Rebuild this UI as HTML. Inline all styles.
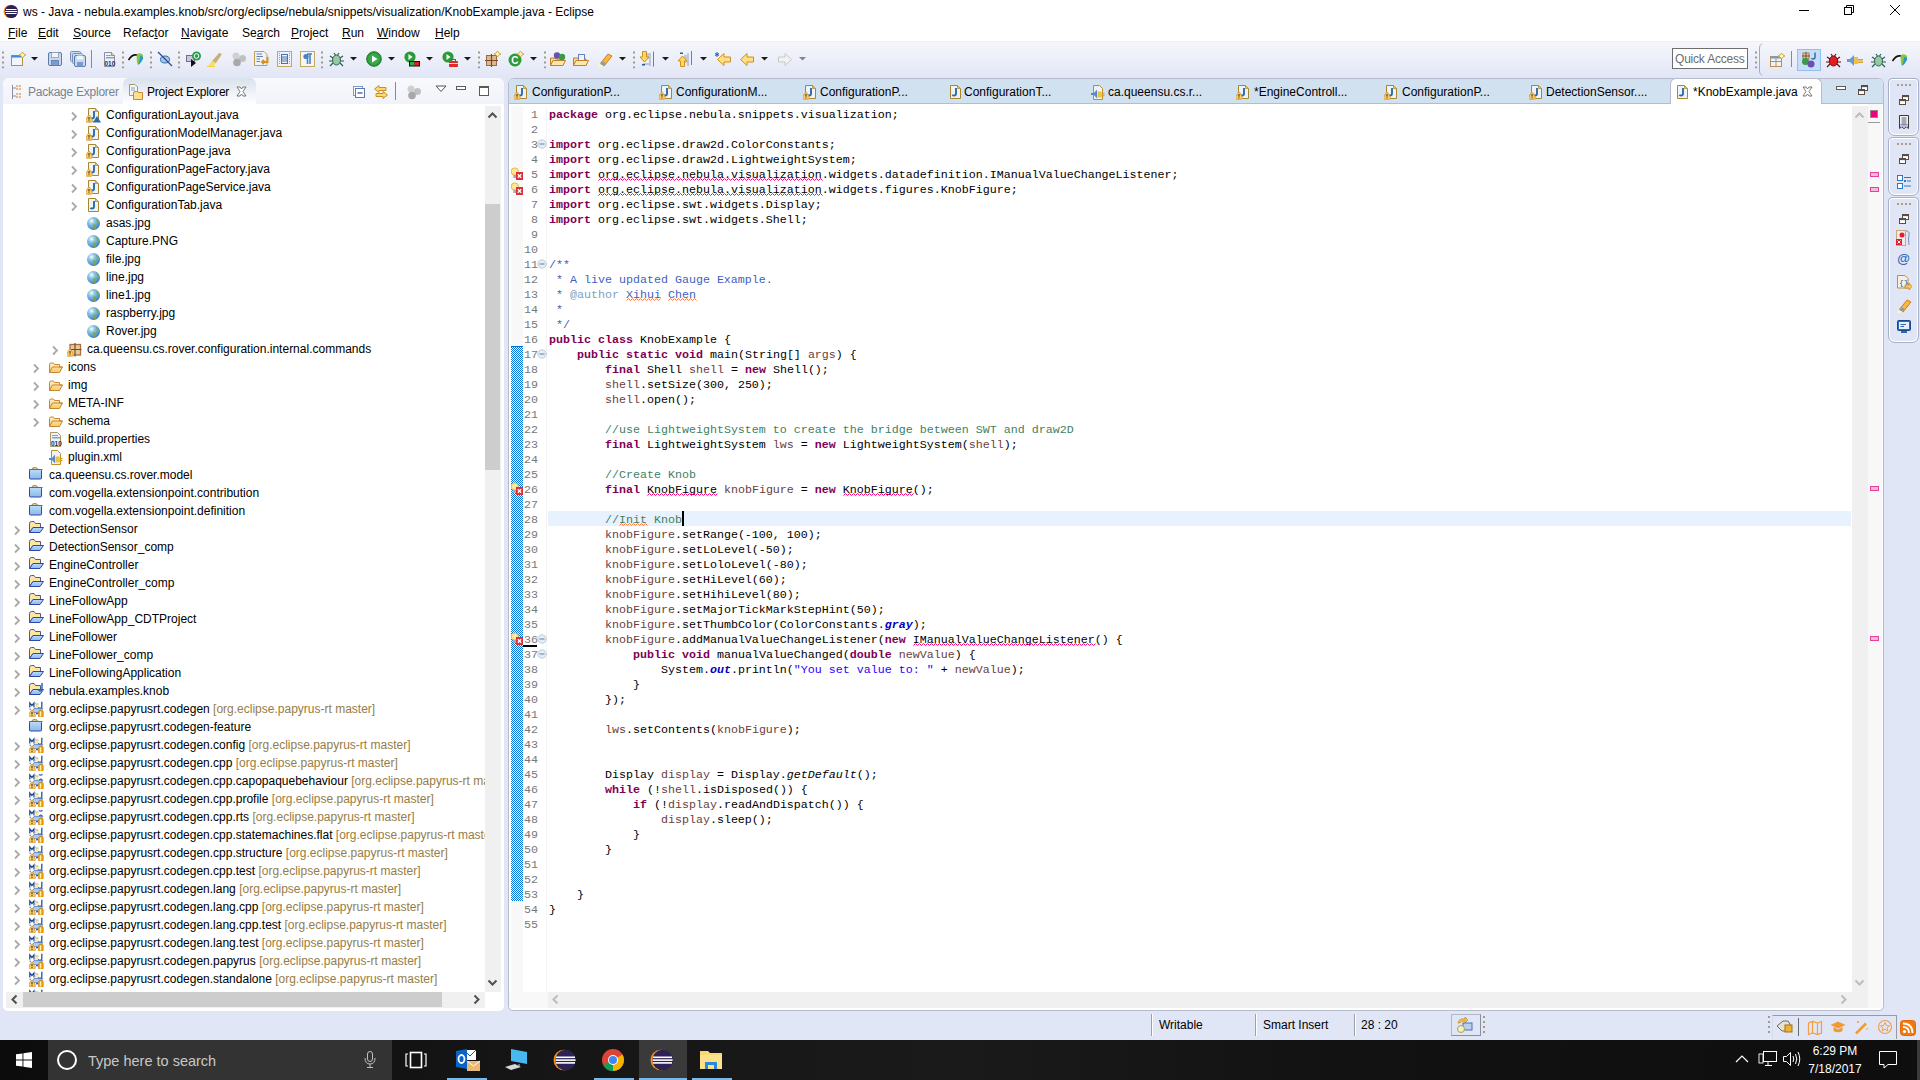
<!DOCTYPE html><html><head><meta charset="utf-8"><style>
*{box-sizing:border-box}
body{margin:0;width:1920px;height:1080px;position:relative;overflow:hidden;background:#E1E6F6;font-family:"Liberation Sans",sans-serif;font-size:12px;color:#000}
.a{position:absolute}
.t{position:absolute;white-space:pre;line-height:18px}
.i{position:absolute;width:16px;height:16px;overflow:visible}
.code{position:absolute;left:549px;top:108px;font-family:"Liberation Mono",monospace;font-size:11.67px;line-height:15px;white-space:pre;color:#000}
.code div{height:15px}
.k{color:#7F0055;font-weight:bold}
.c{color:#3F7F5F}
.jd{color:#3F5FBF}
.jt{color:#7F9FBF}
.s{color:#2A00FF}
.l{color:#6A3E3E}
.sf{color:#0000C0;font-style:italic;font-weight:bold}
.sm{font-style:italic}
.sq{}
.ln{position:absolute;left:517px;width:21px;text-align:right;font-family:"Liberation Mono",monospace;font-size:11.67px;line-height:15px;color:#787878}
.dec{color:#957D47}
.tab{position:absolute;top:79px;height:24px;line-height:24px;white-space:pre}
</style></head><body>

<svg width="0" height="0" style="position:absolute"><defs>
<linearGradient id="gfold" x1="0" y1="0" x2="0" y2="1"><stop offset="0" stop-color="#FFF3C8"/><stop offset="1" stop-color="#F5C96A"/></linearGradient>
<linearGradient id="gblue" x1="0" y1="0" x2="0" y2="1"><stop offset="0" stop-color="#B5E0FA"/><stop offset="1" stop-color="#8FB5E8"/></linearGradient>
<radialGradient id="gglobe" cx="0.35" cy="0.3" r="0.8"><stop offset="0" stop-color="#FFFFF0"/><stop offset="0.3" stop-color="#8CC8E8"/><stop offset="1" stop-color="#2F6FB5"/></radialGradient>
<symbol id="chev" viewBox="0 0 16 16"><path d="M6 5.5 L10 9.5 L6 13.5" fill="none" stroke="#A9A9A9" stroke-width="1.8"/></symbol>
<symbol id="warn" viewBox="0 0 16 16"><path d="M3 8.3 Q3.8 8.3 4.3 9.3 L6.3 13.3 Q6.8 15.2 5.3 15.2 H0.7 Q-0.8 15.2 -0.3 13.3 L1.7 9.3 Q2.2 8.3 3 8.3Z" fill="#F8CC68" stroke="#DC9838" stroke-width="0.9"/><path d="M3 10 V12.6 M3 13.4 V14.2" stroke="#3A2400" stroke-width="1"/></symbol>
<symbol id="jfile" viewBox="0 0 16 16"><path d="M2.5 1.5 H9.5 L12.5 4.5 V14.5 H2.5 Z" fill="#EEF3FA" stroke="#A8862E"/><path d="M9.5 1.5 L12.5 4.5 H9.5 Z" fill="#E8C878" stroke="#B8902A" stroke-width="0.8"/><path d="M8 4 V9.5 Q8 11.6 6 11.6 Q5 11.6 4.4 10.8" fill="none" stroke="#2E6AA8" stroke-width="1.9"/></symbol>
<symbol id="absov" viewBox="0 0 16 16"><path d="M11 9 L15 15.5 H7 Z" fill="#2A6AB0"/></symbol>
<symbol id="globe" viewBox="0 0 16 16"><circle cx="7.5" cy="8.5" r="6.5" fill="url(#gglobe)"/><path d="M8 9 Q10 10 10.5 12 Q9.5 14.5 8.5 14 Q8 12 7 10.5 Z" fill="#7FA83A"/><path d="M10.5 4 Q12.5 5 13 8 L12 9 Q11 6 10 5Z" fill="#8AB040"/></symbol>
<symbol id="pkg" viewBox="0 0 16 16"><rect x="3" y="3.5" width="10.5" height="10.5" fill="#E8CC98" stroke="#A86E48" stroke-width="1.3"/><path d="M8 2 V15.5 M3 8.5 H14.5" stroke="#7A4A30" stroke-width="1.2"/></symbol>
<symbol id="folder" viewBox="0 0 16 16"><path d="M1.5 5.5 Q1.5 4 3 4 H5.5 L6.5 5.5 H11.5 V8 H14.5 L11.5 13.5 H1.5 Z" fill="url(#gfold)" stroke="#C98530"/><path d="M1.5 13.5 L4.5 8 H14.5" fill="none" stroke="#C98530"/></symbol>
<symbol id="props" viewBox="0 0 16 16"><path d="M2.5 1.5 H9.5 L12.5 4.5 V15.5 H2.5 Z" fill="#EEF3FA" stroke="#A89870"/><rect x="4" y="4" width="6" height="1" fill="#8AA0C8"/><rect x="4" y="6" width="8" height="1.5" fill="#8AA0C8"/><text x="3" y="14.5" font-family="Liberation Sans" font-weight="bold" font-size="6.5" fill="#1A2E5A">010</text></symbol>
<symbol id="plugin" viewBox="0 0 16 16"><path d="M3.5 1.5 H9.5 L12.5 4.5 V15.5 H3.5 Z" fill="#EEF3FA" stroke="#B8902A"/><path d="M1 9 H4 L7 5.5 V14.5 L4 11 H1 Z" fill="#5A88C8"/><rect x="7.5" y="7.5" width="4" height="6" fill="#F0C040"/><rect x="11.5" y="9" width="3" height="1.3" fill="#D8A020"/><rect x="11.5" y="11" width="3" height="1.3" fill="#D8A020"/></symbol>
<symbol id="projc" viewBox="0 0 16 16"><path d="M3 2.5 Q3 0.5 5 0.5 H6.5 Q8.5 0.5 8.5 2.5" fill="#F5C870" stroke="#7A88A0" stroke-width="0.9"/><rect x="0.5" y="2.5" width="12" height="9.5" rx="1" fill="url(#gblue)" stroke="#2E46B0"/><path d="M-0.5 2.5 H13.5" stroke="#5A6A90"/></symbol>
<symbol id="projo" viewBox="0 0 16 16"><path d="M0.5 11.5 V2.5 Q0.5 0.5 2.5 0.5 H5 L6.5 2.5 H11.5 V6.5 H4 Z" fill="#FFE6A0" stroke="#4A5A98"/><path d="M0.5 11.5 L4 6.5 H14.5 L11 11.5 Z" fill="url(#gblue)" stroke="#2E46B0"/></symbol>
<symbol id="projj" viewBox="0 0 16 16"><path d="M0.5 11.5 V2.5 Q0.5 0.5 2.5 0.5 H5 L6.5 2.5 H11.5 V6.5 H4 Z" fill="#FFE6A0" stroke="#4A5A98"/><path d="M0.5 11.5 L4 6.5 H14.5 L11 11.5 Z" fill="url(#gblue)" stroke="#2E46B0"/><path d="M13 0 V6 Q13 8 11 8 Q10 8 9.5 7" fill="none" stroke="#2E6DB0" stroke-width="1.5"/></symbol>
<symbol id="papy" viewBox="0 0 16 16"><g transform="translate(0,0.8)"><path d="M0.8 5.8 V1.2 L2.9 3.6 L5 1.2 V5.8" fill="none" stroke="#1F4F98" stroke-width="1.3"/><path d="M5.8 0.5 L7.5 2 H9.5 V6.5 H5.8 Z" fill="#FCE6A8"/><path d="M6 1 L7.5 2.2 H9.5" fill="none" stroke="#8090A8" stroke-width="0.6"/><path d="M12.8 0 V4.6 Q12.8 6.6 10.8 6.6 Q9.8 6.6 9.3 5.6" stroke="#2E5FA8" stroke-width="1.4" fill="none"/><path d="M2 10.8 L5 6.8 H13.8 L10.8 10.8 Z" fill="#A8D0F5" stroke="#3A6AC0" stroke-width="0.7"/><path d="M1.2 6.8 V8.2" stroke="#2E46B0" stroke-width="0.9"/><path d="M3 8.3 Q3.8 8.3 4.3 9.3 L6.3 13.3 Q6.8 15 5.3 15 H0.7 Q-0.8 15 -0.3 13.3 L1.7 9.3 Q2.2 8.3 3 8.3Z" fill="#F8CC68" stroke="#D89030" stroke-width="0.8"/><path d="M3 10 V12.6 M3 13.4 V14.2" stroke="#3A2400" stroke-width="1"/><rect x="7" y="11.3" width="2" height="1.2" fill="#2E46B0"/><rect x="9.6" y="8.6" width="4.6" height="7" rx="1.3" fill="#F0A400" stroke="#C88000" stroke-width="0.7"/><rect x="10.8" y="9.6" width="1.4" height="5" fill="#FFF0B8"/></g></symbol>
<symbol id="papy2" viewBox="0 0 16 16"><g transform="translate(0,0.8)"><path d="M0.8 5.8 V1.2 L2.9 3.6 L5 1.2 V5.8" fill="none" stroke="#1F4F98" stroke-width="1.3"/><path d="M5.8 0.5 L7.5 2 H9.5 V6.5 H5.8 Z" fill="#FCE6A8"/><path d="M6 1 L7.5 2.2 H9.5" fill="none" stroke="#8090A8" stroke-width="0.6"/><path d="M10 0.5 Q11.5 2 13.5 0.5 M10 6.5 Q11.5 4 13.5 6.5" stroke="#2E5FA8" stroke-width="1.2" fill="none"/><path d="M2 10.8 L5 6.8 H13.8 L10.8 10.8 Z" fill="#A8D0F5" stroke="#3A6AC0" stroke-width="0.7"/><path d="M1.2 6.8 V8.2" stroke="#2E46B0" stroke-width="0.9"/><path d="M3 8.3 Q3.8 8.3 4.3 9.3 L6.3 13.3 Q6.8 15 5.3 15 H0.7 Q-0.8 15 -0.3 13.3 L1.7 9.3 Q2.2 8.3 3 8.3Z" fill="#F8CC68" stroke="#D89030" stroke-width="0.8"/><path d="M3 10 V12.6 M3 13.4 V14.2" stroke="#3A2400" stroke-width="1"/><rect x="7" y="11.3" width="2" height="1.2" fill="#2E46B0"/><rect x="9.6" y="8.6" width="4.6" height="7" rx="1.3" fill="#F0A400" stroke="#C88000" stroke-width="0.7"/><rect x="10.8" y="9.6" width="1.4" height="5" fill="#FFF0B8"/></g></symbol>
<symbol id="fold" viewBox="0 0 10 10"><circle cx="5" cy="5" r="4.2" fill="#E4EEF8" stroke="#B8C8D8" stroke-width="0.9"/><rect x="2.5" y="4.5" width="5" height="1" fill="#6A7A8A"/></symbol>
<symbol id="errq" viewBox="0 0 16 16"><circle cx="3.8" cy="5.5" r="3.6" fill="#FBE89A" stroke="#E8B030" stroke-width="0.9"/><rect x="2.3" y="9" width="3" height="3" fill="#A8A8B0"/><rect x="5" y="6" width="7" height="8" fill="#D9303A"/><path d="M6.8 8.2 L10.2 11.8 M10.2 8.2 L6.8 11.8" stroke="#fff" stroke-width="1.3"/></symbol>
<symbol id="dd" viewBox="0 0 8 8"><path d="M0 2 H7 L3.5 5.5 Z" fill="#1A1A1A"/></symbol>
<symbol id="grip" viewBox="0 0 4 18"><rect x="1" y="1" width="2" height="2" fill="#A09A88"/><rect x="1" y="6" width="2" height="2" fill="#A09A88"/><rect x="1" y="11" width="2" height="2" fill="#A09A88"/><rect x="1" y="16" width="2" height="2" fill="#A09A88"/></symbol>
</defs></svg>

<div class="a" style="left:0;top:0;width:1920px;height:41px;background:#fff"></div>
<div class="a" style="left:0;top:41px;width:1920px;height:1px;background:#F0F0F0"></div>
<div class="a" style="left:0;top:42px;width:1920px;height:36px;background:linear-gradient(#F6F7FC,#E1E6F6)"></div>
<svg class="a" style="left:0;top:0" width="24" height="24" viewBox="0 0 24 24"><circle cx="10.2" cy="11.5" r="6.6" fill="#F7941E"/><circle cx="11.4" cy="11.5" r="6.6" fill="#2C2255"/><rect x="6" y="9" width="10.5" height="1" fill="#fff"/><rect x="5.3" y="11" width="12" height="1" fill="#fff"/><rect x="6" y="13" width="10.5" height="1" fill="#fff"/></svg>
<div class="t" style="left:23px;top:3px">ws - Java - nebula.examples.knob/src/org/eclipse/nebula/snippets/visualization/KnobExample.java - Eclipse</div>
<div class="a" style="left:1799px;top:10px;width:10px;height:1px;background:#000"></div>
<svg class="a" style="left:1843px;top:4px" width="12" height="12" viewBox="0 0 12 12"><rect x="1.5" y="3.5" width="7" height="7" fill="none" stroke="#000"/><path d="M3.5 3.5 V1.5 H10.5 V8.5 H8.5" fill="none" stroke="#000"/></svg>
<svg class="a" style="left:1889px;top:4px" width="12" height="12" viewBox="0 0 12 12"><path d="M1 1 L11 11 M11 1 L1 11" stroke="#000" stroke-width="1"/></svg>
<div class="t" style="left:8px;top:24px"><u>F</u>ile</div>
<div class="t" style="left:38px;top:24px"><u>E</u>dit</div>
<div class="t" style="left:73px;top:24px"><u>S</u>ource</div>
<div class="t" style="left:123px;top:24px">Refac<u>t</u>or</div>
<div class="t" style="left:181px;top:24px"><u>N</u>avigate</div>
<div class="t" style="left:242px;top:24px">Se<u>a</u>rch</div>
<div class="t" style="left:291px;top:24px"><u>P</u>roject</div>
<div class="t" style="left:342px;top:24px"><u>R</u>un</div>
<div class="t" style="left:377px;top:24px"><u>W</u>indow</div>
<div class="t" style="left:435px;top:24px"><u>H</u>elp</div>
<svg width="0" height="0" style="position:absolute"><defs>
<symbol id="tb_new" viewBox="0 0 16 16"><rect x="1.5" y="4.5" width="11" height="10" fill="#F0F6FC" stroke="#B89030"/><rect x="1.5" y="4.5" width="10" height="2" fill="#3A8AD8"/><path d="M12.5 1 L14 3 L16 4 L14 5 L12.5 7 L11 5 L9 4 L11 3 Z" fill="#FFF2B0" stroke="#C89830" stroke-width="0.8"/></symbol>
<symbol id="tb_save" viewBox="0 0 16 16"><rect x="1.5" y="1.5" width="13" height="13" rx="1.5" fill="#C8D8EE" stroke="#5A7AB0"/><rect x="4.5" y="1.5" width="7" height="5" fill="#F4F4F0" stroke="#8A9AB8" stroke-width="0.8"/><rect x="4.5" y="9.5" width="7" height="5" fill="#7A9AD0" stroke="#5A7AB0" stroke-width="0.8"/></symbol>
<symbol id="tb_saveall" viewBox="0 0 16 16"><rect x="0.5" y="0.5" width="10" height="10" rx="1" fill="#C8D8EE" stroke="#7A90B8"/><rect x="2.5" y="2.5" width="10" height="10" rx="1" fill="#C8D8EE" stroke="#7A90B8"/><rect x="4.5" y="4.5" width="11" height="11" rx="1.5" fill="#C8D8EE" stroke="#5A7AB0"/><rect x="7" y="4.5" width="6" height="4" fill="#F4F4F0"/><rect x="7" y="11" width="6" height="4.5" fill="#7A9AD0"/></symbol>
<symbol id="tb_build" viewBox="0 0 16 16"><path d="M2.5 1.5 H9.5 L12.5 4.5 V15.5 H2.5 Z" fill="#EEF3FA" stroke="#8A90A8"/><path d="M9.5 1.5 V4.5 H12.5" fill="#F2D890" stroke="#B8902A"/><rect x="4" y="4" width="5" height="1" fill="#8AA0C8"/><rect x="4" y="6" width="8" height="1.5" fill="#8AA0C8"/><text x="2.5" y="14.5" font-family="Liberation Sans" font-weight="bold" font-size="6.5" fill="#1A2E5A">010</text></symbol>
<symbol id="tb_papy" viewBox="0 0 16 16"><path d="M0.5 9 Q4 3 9 4" fill="none" stroke="#111" stroke-width="1.6"/><path d="M9 3 Q13 1 15 4 Q15.5 9 10 14 Q8 10 9 3Z" fill="#8CC63F"/><path d="M12 5 Q16 5 15 8 Q13 12 10 14 Q12 9 12 5Z" fill="#2A9AC8"/></symbol>
<symbol id="tb_skip" viewBox="0 0 16 16"><ellipse cx="8" cy="8.5" rx="4.5" ry="3.5" fill="#A8C8E8" stroke="#3A6AA8"/><path d="M1 1 L15 15" stroke="#2A4A98" stroke-width="1.3"/></symbol>
<symbol id="tb_agent" viewBox="0 0 16 16"><rect x="1.5" y="4.5" width="8" height="6" fill="#C8C8E0" stroke="#7A6A90"/><path d="M6 8 V16 L11 12 Z" fill="#111"/><circle cx="11.5" cy="5" r="4.5" fill="#2A9A4A"/><circle cx="11.5" cy="5" r="2.3" fill="none" stroke="#fff" stroke-width="1"/></symbol>
<symbol id="tb_pen" viewBox="0 0 16 16"><path d="M2 15 L6 9 L12 2 L15 3 L9 12 Z" fill="#C8B078"/><path d="M1 15.5 L5 10 L9 12 L6 15.5 Z" fill="#F6E060"/><path d="M0 15.5 H8" stroke="#F0D040"/></symbol>
<symbol id="tb_gray" viewBox="0 0 16 16"><circle cx="5" cy="5" r="3.5" fill="#D0D0D0"/><circle cx="11.5" cy="7.5" r="3.5" fill="#C0C0C0"/><circle cx="6" cy="11.5" r="3.8" fill="#A8A8A8"/></symbol>
<symbol id="tb_extp" viewBox="0 0 16 16"><path d="M0.5 0.5 H10 L13 3.5 V14.5 H0.5 Z" fill="#EEF3FA" stroke="#C0A050"/><path d="M2.5 3 H8 M2.5 5.5 H9 M2.5 8 H6 M2.5 10.5 H6" stroke="#6A80B8"/><path d="M13.5 6 V11 H8 M10 9 L8 11 L10 13" fill="none" stroke="#D89020" stroke-width="2"/></symbol>
<symbol id="tb_list" viewBox="0 0 16 16"><rect x="0.5" y="0.5" width="14" height="15" fill="#EEF3FA" stroke="#C0A860"/><path d="M2.5 2 V14 M12.5 2 V14" stroke="#8AA0C8" stroke-dasharray="1 1"/><rect x="4.5" y="3.5" width="6" height="9" fill="none" stroke="#4A70B0"/><path d="M5 6 H10 M5 8 H10 M5 10 H10" stroke="#4A70B0"/></symbol>
<symbol id="tb_pil" viewBox="0 0 16 16"><rect x="0.5" y="0.5" width="14" height="15" fill="#F4F6FA" stroke="#C0A860"/><path d="M7 3 H12 M7.5 3 V13 M10 3 V13" stroke="#4A80C8" stroke-width="1.6"/><circle cx="6" cy="5.5" r="2.6" fill="#4A80C8"/></symbol>
<symbol id="tb_bug" viewBox="0 0 16 16"><ellipse cx="8.5" cy="9" rx="4" ry="5" fill="#9AC8A0" stroke="#2A6A5A"/><path d="M2 5 L5 7 M1 10 H4.5 M2 15 L5 12 M15 5 L12 7 M16 10 H12.5 M15 15 L12 12 M6 2 L7.5 4 M11 2 L9.5 4" stroke="#2A5A5A" stroke-width="1.2"/></symbol>
<symbol id="tb_run" viewBox="0 0 16 16"><circle cx="8" cy="8" r="7.3" fill="#2A9A3A" stroke="#1A7A2A"/><circle cx="8" cy="8" r="5.8" fill="#38A848"/><path d="M6 4.5 L11.5 8 L6 11.5 Z" fill="#fff"/></symbol>
<symbol id="tb_cov" viewBox="0 0 16 16"><circle cx="6" cy="6" r="5.6" fill="#2A9A3A"/><path d="M4.5 3 L8.5 6 L4.5 9 Z" fill="#fff"/><rect x="5" y="10" width="11" height="5.5" fill="#111"/><rect x="6" y="11" width="4.5" height="3.5" fill="#2AB040"/><rect x="10.5" y="11" width="4.5" height="3.5" fill="#E02020"/></symbol>
<symbol id="tb_ext" viewBox="0 0 16 16"><circle cx="6" cy="6" r="5.6" fill="#2A9A3A"/><path d="M4.5 3 L8.5 6 L4.5 9 Z" fill="#fff"/><rect x="7" y="10" width="9" height="6" rx="1" fill="#E02A2A"/><rect x="9.5" y="8.5" width="4" height="2" fill="none" stroke="#E02A2A"/><path d="M7 12.5 H16" stroke="#fff" stroke-width="0.8"/></symbol>
<symbol id="tb_npkg" viewBox="0 0 16 16"><rect x="1.5" y="4.5" width="10" height="10" fill="#DDB888" stroke="#9A6A48"/><path d="M6.5 3 V16 M0 9.5 H13" stroke="#7A4A30" stroke-width="1.2"/><path d="M12.5 0 L14 2 L16 3 L14 4 L12.5 6 L11 4 L9 3 L11 2 Z" fill="#FFF2B0" stroke="#C89830" stroke-width="0.8"/></symbol>
<symbol id="tb_ncls" viewBox="0 0 16 16"><circle cx="7" cy="9" r="6.5" fill="#2A9A3A"/><text x="3.2" y="12.8" font-family="Liberation Sans" font-weight="bold" font-size="10" fill="#fff">C</text><path d="M12.5 0 L14 2 L16 3 L14 4 L12.5 6 L11 4 L9 3 L11 2 Z" fill="#FFF2B0" stroke="#C89830" stroke-width="0.8"/></symbol>
<symbol id="tb_otype" viewBox="0 0 16 16"><path d="M0.5 7 H5 L6 8 H13 V14.5 H0.5Z" fill="#F8D890" stroke="#C08030"/><path d="M0.5 14.5 L3 9.5 H15.5 L13 14.5 Z" fill="#FCE6A8" stroke="#C08030"/><circle cx="7" cy="4.5" r="3.2" fill="#6A50B0"/><circle cx="12" cy="6" r="3.2" fill="#3A9A4A"/></symbol>
<symbol id="tb_otask" viewBox="0 0 16 16"><path d="M0.5 7 H5 L6 8 H13 V14.5 H0.5Z" fill="#F8D890" stroke="#C08030"/><rect x="5.5" y="3.5" width="6" height="6" fill="#EEF3FA" stroke="#6A80B8"/><path d="M0.5 14.5 L3 9.5 H15.5 L13 14.5 Z" fill="#FCE6A8" stroke="#C08030"/></symbol>
<symbol id="tb_search" viewBox="0 0 16 16"><path d="M3 13 L11 3 L15 5 L7 15 Z" fill="#F8B840" stroke="#C88020"/><path d="M1 16 L3 12 L7 14.5 L4 16 Z" fill="#FFF8C0"/><path d="M3 13 L7 15 L9 12 L5 10 Z" fill="#9A9A9A"/></symbol>
<symbol id="tb_nann" viewBox="0 0 16 16"><path d="M10 2 V15 M6 3 H9 M6 5 H9 M6 7 H9 M3 13 H9" stroke="#8AA0C8"/><path d="M13.5 0.5 V15.5" stroke="#6A80A8"/><path d="M2.5 0.5 H6.5 V6 H9 L4.5 11 L0 6 H2.5 Z" fill="#FFD860" stroke="#D09020"/><rect x="2" y="13" width="3" height="1.5" fill="#2A5AA8"/></symbol>
<symbol id="tb_pann" viewBox="0 0 16 16"><path d="M10 2 V15 M6 5 H9 M6 7 H9 M6 9 H9 M6 11 H9" stroke="#8AA0C8"/><path d="M13.5 0 V14" stroke="#6A80A8"/><path d="M2.5 15.5 H6.5 V10 H9 L4.5 5 L0 10 H2.5 Z" fill="#FFD860" stroke="#D09020"/><rect x="2" y="1.5" width="3" height="1.5" fill="#2A5AA8"/></symbol>
<symbol id="tb_last" viewBox="0 0 16 16"><path d="M15.5 6 V11 H9 V14.5 L2.5 8.5 L9 2.5 V6 Z" fill="#FFE080" stroke="#D09020" stroke-linejoin="round"/><path d="M2 1 V6 M0 2.5 L4 4.5 M4 2.5 L0 4.5" stroke="#2A5AA8"/></symbol>
<symbol id="tb_back" viewBox="0 0 16 16"><path d="M14.5 6 V11 H8 V14.5 L1.5 8.5 L8 2.5 V6 Z" fill="#FFE080" stroke="#D09020" stroke-linejoin="round"/></symbol>
<symbol id="tb_fwd" viewBox="0 0 16 16"><path d="M1.5 6 V11 H8 V14.5 L14.5 8.5 L8 2.5 V6 Z" fill="#F2F2F2" stroke="#C8C8C8" stroke-linejoin="round"/></symbol>
<symbol id="tb_persp" viewBox="0 0 16 16"><rect x="1.5" y="4.5" width="11" height="10" fill="#EEF3FA" stroke="#B89050"/><path d="M1.5 9.5 H12.5 M7 4.5 V14.5" stroke="#B89050"/><rect x="1.5" y="4.5" width="11" height="2" fill="#6AA0D8"/><path d="M12.5 1 L14 3 L16 4 L14 5 L12.5 7 L11 5 L9 4 L11 3 Z" fill="#FFF2B0" stroke="#C89830" stroke-width="0.8"/></symbol>
<symbol id="tb_java" viewBox="0 0 16 16"><rect x="2" y="1" width="6" height="6" fill="#E4C898" stroke="#9A6A48" stroke-width="0.8"/><path d="M5 0 V8 M1 4 H9" stroke="#7A4A30"/><path d="M14 0.5 V5 Q14 7 12 7 Q11 7 10.5 6" fill="none" stroke="#2E6DB0" stroke-width="1.5"/><circle cx="4.5" cy="9.5" r="3.5" fill="#3A9A4A"/><circle cx="10" cy="12" r="3.5" fill="#6A50B0"/></symbol>
<symbol id="tb_debug" viewBox="0 0 16 16"><ellipse cx="8.5" cy="9" rx="4.2" ry="5" fill="#E02020" stroke="#7A0A0A"/><path d="M2 5 L5 7 M1 10 H4.5 M2 15 L5 12 M15 5 L12 7 M16 10 H12.5 M15 15 L12 12 M6 2 L7.5 4 M11 2 L9.5 4" stroke="#6A0A0A" stroke-width="1.2"/></symbol>
<symbol id="tb_plug" viewBox="0 0 16 16"><path d="M0 7 H3 L7 3 V14 L3 10 H0 Z" fill="#6A98D8"/><rect x="7" y="5" width="4" height="7" fill="#F0C040"/><rect x="11" y="7" width="5" height="1.5" fill="#D8A020"/><rect x="11" y="9.5" width="5" height="1.5" fill="#D8A020"/></symbol>
</defs></svg>
<svg class="a" style="left:1px;top:50px" width="4" height="19" viewBox="0 0 4 18"><use href="#grip"/></svg>
<svg class="i" style="left:10px;top:51px;width:16px;height:16px" viewBox="0 0 16 16"><use href="#tb_new"/></svg>
<svg class="a" style="left:31px;top:55px" width="8" height="8" viewBox="0 0 8 8"><use href="#dd"/></svg>
<svg class="i" style="left:47px;top:51px;width:16px;height:16px" viewBox="0 0 16 16"><use href="#tb_save"/></svg>
<svg class="i" style="left:70px;top:51px;width:16px;height:16px" viewBox="0 0 16 16"><use href="#tb_saveall"/></svg>
<div class="a" style="left:91px;top:50px;width:1px;height:18px;background:#8A8A8A"></div>
<svg class="i" style="left:102px;top:51px;width:16px;height:16px" viewBox="0 0 16 16"><use href="#tb_build"/></svg>
<svg class="a" style="left:121px;top:50px" width="4" height="19" viewBox="0 0 4 18"><use href="#grip"/></svg>
<svg class="i" style="left:128px;top:51px;width:16px;height:16px" viewBox="0 0 16 16"><use href="#tb_papy"/></svg>
<svg class="a" style="left:149px;top:50px" width="4" height="19" viewBox="0 0 4 18"><use href="#grip"/></svg>
<svg class="i" style="left:157px;top:51px;width:16px;height:16px" viewBox="0 0 16 16"><use href="#tb_skip"/></svg>
<svg class="a" style="left:177px;top:50px" width="4" height="19" viewBox="0 0 4 18"><use href="#grip"/></svg>
<svg class="i" style="left:185px;top:51px;width:16px;height:16px" viewBox="0 0 16 16"><use href="#tb_agent"/></svg>
<svg class="i" style="left:207px;top:51px;width:16px;height:16px" viewBox="0 0 16 16"><use href="#tb_pen"/></svg>
<svg class="i" style="left:231px;top:51px;width:16px;height:16px" viewBox="0 0 16 16"><use href="#tb_gray"/></svg>
<svg class="i" style="left:254px;top:51px;width:16px;height:16px" viewBox="0 0 16 16"><use href="#tb_extp"/></svg>
<svg class="i" style="left:277px;top:51px;width:16px;height:16px" viewBox="0 0 16 16"><use href="#tb_list"/></svg>
<svg class="i" style="left:300px;top:51px;width:16px;height:16px" viewBox="0 0 16 16"><use href="#tb_pil"/></svg>
<svg class="a" style="left:320px;top:50px" width="4" height="19" viewBox="0 0 4 18"><use href="#grip"/></svg>
<svg class="i" style="left:328px;top:51px;width:16px;height:16px" viewBox="0 0 16 16"><use href="#tb_bug"/></svg>
<svg class="a" style="left:350px;top:55px" width="8" height="8" viewBox="0 0 8 8"><use href="#dd"/></svg>
<svg class="i" style="left:366px;top:51px;width:16px;height:16px" viewBox="0 0 16 16"><use href="#tb_run"/></svg>
<svg class="a" style="left:388px;top:55px" width="8" height="8" viewBox="0 0 8 8"><use href="#dd"/></svg>
<svg class="i" style="left:404px;top:51px;width:16px;height:16px" viewBox="0 0 16 16"><use href="#tb_cov"/></svg>
<svg class="a" style="left:426px;top:55px" width="8" height="8" viewBox="0 0 8 8"><use href="#dd"/></svg>
<svg class="i" style="left:442px;top:51px;width:16px;height:16px" viewBox="0 0 16 16"><use href="#tb_ext"/></svg>
<svg class="a" style="left:464px;top:55px" width="8" height="8" viewBox="0 0 8 8"><use href="#dd"/></svg>
<svg class="a" style="left:477px;top:50px" width="4" height="19" viewBox="0 0 4 18"><use href="#grip"/></svg>
<svg class="i" style="left:485px;top:51px;width:16px;height:16px" viewBox="0 0 16 16"><use href="#tb_npkg"/></svg>
<svg class="i" style="left:508px;top:51px;width:16px;height:16px" viewBox="0 0 16 16"><use href="#tb_ncls"/></svg>
<svg class="a" style="left:530px;top:55px" width="8" height="8" viewBox="0 0 8 8"><use href="#dd"/></svg>
<svg class="a" style="left:543px;top:50px" width="4" height="19" viewBox="0 0 4 18"><use href="#grip"/></svg>
<svg class="i" style="left:550px;top:51px;width:16px;height:16px" viewBox="0 0 16 16"><use href="#tb_otype"/></svg>
<svg class="i" style="left:573px;top:51px;width:16px;height:16px" viewBox="0 0 16 16"><use href="#tb_otask"/></svg>
<svg class="i" style="left:597px;top:51px;width:16px;height:16px" viewBox="0 0 16 16"><use href="#tb_search"/></svg>
<svg class="a" style="left:619px;top:55px" width="8" height="8" viewBox="0 0 8 8"><use href="#dd"/></svg>
<svg class="a" style="left:632px;top:50px" width="4" height="19" viewBox="0 0 4 18"><use href="#grip"/></svg>
<svg class="i" style="left:640px;top:51px;width:16px;height:16px" viewBox="0 0 16 16"><use href="#tb_nann"/></svg>
<svg class="a" style="left:662px;top:55px" width="8" height="8" viewBox="0 0 8 8"><use href="#dd"/></svg>
<svg class="i" style="left:678px;top:51px;width:16px;height:16px" viewBox="0 0 16 16"><use href="#tb_pann"/></svg>
<svg class="a" style="left:700px;top:55px" width="8" height="8" viewBox="0 0 8 8"><use href="#dd"/></svg>
<svg class="i" style="left:715px;top:51px;width:16px;height:16px" viewBox="0 0 16 16"><use href="#tb_last"/></svg>
<svg class="i" style="left:739px;top:51px;width:16px;height:16px" viewBox="0 0 16 16"><use href="#tb_back"/></svg>
<svg class="a" style="left:761px;top:55px" width="8" height="8" viewBox="0 0 8 8"><use href="#dd"/></svg>
<svg class="i" style="left:777px;top:51px;width:16px;height:16px" viewBox="0 0 16 16"><use href="#tb_fwd"/></svg>
<svg class="a" style="left:799px;top:55px;opacity:0.5" width="8" height="8" viewBox="0 0 8 8"><use href="#dd"/></svg>
<div class="a" style="left:1672px;top:48px;width:76px;height:21px;background:#fff;border:1px solid #6E6E6E"></div>
<div class="t" style="left:1675px;top:50px;color:#6D6D6D;line-height:19px;letter-spacing:-0.2px">Quick Access</div>
<svg class="a" style="left:1754px;top:50px" width="4" height="19" viewBox="0 0 4 18"><use href="#grip"/></svg>
<svg class="a" style="left:1758px;top:43px" width="6" height="33" viewBox="0 0 6 33"><path d="M4 0.5 Q1.5 2 1.5 5 V28 Q1.5 31 4 32.5" fill="none" stroke="#A8A8B8"/></svg>
<svg class="i" style="left:1769px;top:52px;width:16px;height:16px" viewBox="0 0 16 16"><use href="#tb_persp"/></svg>
<div class="a" style="left:1791px;top:51px;width:1px;height:16px;background:#8A8A8A"></div>
<div class="a" style="left:1797px;top:49px;width:24px;height:22px;background:#C8DEF8;border:1px solid #90C0F0"></div>
<svg class="i" style="left:1801px;top:52px;width:16px;height:16px" viewBox="0 0 16 16"><use href="#tb_java"/></svg>
<svg class="i" style="left:1825px;top:52px;width:16px;height:16px" viewBox="0 0 16 16"><use href="#tb_debug"/></svg>
<svg class="i" style="left:1847px;top:52px;width:16px;height:16px" viewBox="0 0 16 16"><use href="#tb_plug"/></svg>
<svg class="i" style="left:1870px;top:52px;width:16px;height:16px" viewBox="0 0 16 16"><use href="#tb_bug"/></svg>
<svg class="i" style="left:1892px;top:52px;width:16px;height:16px" viewBox="0 0 16 16"><use href="#tb_papy"/></svg>
<div class="a" style="left:3px;top:78px;width:501px;height:933px;background:#fff;border-radius:6px 6px 5px 5px"></div>
<div class="a" style="left:3px;top:78px;width:501px;height:26px;background:linear-gradient(#F8F9FC,#F1F3F9);border-radius:6px 6px 0 0"></div>
<div class="a" style="left:123px;top:78px;width:133px;height:26px;background:linear-gradient(#D9E1EC,#FFFFFF);border-radius:6px 6px 0 0"></div>
<svg class="a" style="left:11px;top:84px" width="16" height="16" viewBox="0 0 16 16"><path d="M1.5 1 V15 M1.5 4 H5 M1.5 12 H5" stroke="#8A90A0" fill="none"/><rect x="5" y="1" width="5" height="5" fill="#E0B898"/><rect x="5" y="9" width="5" height="5" fill="#E0B898"/><path d="M7.5 1 V6 M5 3.5 H10 M7.5 9 V14 M5 11.5 H10" stroke="#fff" stroke-width="0.7"/></svg>
<div class="t" style="left:28px;top:83px;color:#7A8290;letter-spacing:-0.25px">Package Explorer</div>
<svg class="a" style="left:128px;top:84px" width="16" height="16" viewBox="0 0 16 16"><path d="M1.5 0.5 H7 L9.5 3 V11.5 H1.5 Z" fill="#F4F6FA" stroke="#A09878"/><path d="M3 4 H7 M3 6 H7" stroke="#8AA0C8"/><path d="M5.5 9 Q5.5 7.5 7 7.5 H9 L10 8.5 H14.5 V15.5 H5.5 Z" fill="#FFE08A" stroke="#C88A30"/></svg>
<div class="t" style="left:147px;top:83px;letter-spacing:-0.2px">Project Explorer</div>
<svg class="a" style="left:236px;top:86px" width="11" height="11" viewBox="0 0 11 11"><path d="M1 1 L4 1 L5.5 3 L7 1 H10 L7 5.5 L10 10 H7 L5.5 8 L4 10 H1 L4 5.5 Z" fill="#fff" stroke="#6A6A6A" stroke-width="0.9" stroke-linejoin="round"/></svg>
<svg class="a" style="left:351px;top:84px" width="16" height="16" viewBox="0 0 16 16"><rect x="2.5" y="2.5" width="9" height="9" fill="#fff" stroke="#7A9AC8"/><rect x="4.5" y="4.5" width="9" height="9" fill="#fff" stroke="#5A7AB0"/><path d="M6.5 9 H11.5" stroke="#2A4A90" stroke-width="1.2"/></svg>
<svg class="a" style="left:373px;top:84px" width="16" height="16" viewBox="0 0 16 16"><path d="M6 1.5 L1.5 5 L6 8.5 V6.5 H13 V3.5 H6 Z" fill="#FCD870" stroke="#C89020" stroke-linejoin="round"/><path d="M10 7.5 L14.5 11 L10 14.5 V12.5 H3 V9.5 H10 Z" fill="#FCD870" stroke="#C89020" stroke-linejoin="round"/></svg>
<div class="a" style="left:395px;top:82px;width:1px;height:18px;background:#8A8A8A"></div>
<svg class="i" style="left:406px;top:84px;width:16px;height:16px" viewBox="0 0 16 16"><use href="#tb_gray"/></svg>
<svg class="a" style="left:435px;top:85px" width="12" height="8" viewBox="0 0 12 8"><path d="M1 1 H11 L6 6.5 Z" fill="#fff" stroke="#555" stroke-width="1"/></svg>
<div class="a" style="left:456px;top:86px;width:10px;height:4px;border:1px solid #5A5A5A;background:#fff"></div>
<div class="a" style="left:479px;top:86px;width:10px;height:10px;border:1px solid #5A5A5A;background:#fff;box-shadow:inset 0 1px 0 #5A5A5A"></div>
<div class="a" style="left:3px;top:104px;width:482px;height:888px;overflow:hidden">
<svg class="i" style="left:63px;top:3px" viewBox="0 0 16 16"><use href="#chev"/></svg>
<svg class="i" style="left:83px;top:3px" viewBox="0 0 16 16"><use href="#jfile"/></svg>
<svg class="i" style="left:83px;top:3px" viewBox="0 0 16 16"><use href="#warn"/></svg>
<svg class="i" style="left:83px;top:3px" viewBox="0 0 16 16"><use href="#absov"/></svg>
<div class="t" style="left:103px;top:2px">ConfigurationLayout.java</div>
<svg class="i" style="left:63px;top:21px" viewBox="0 0 16 16"><use href="#chev"/></svg>
<svg class="i" style="left:83px;top:21px" viewBox="0 0 16 16"><use href="#jfile"/></svg>
<svg class="i" style="left:83px;top:21px" viewBox="0 0 16 16"><use href="#warn"/></svg>
<div class="t" style="left:103px;top:20px">ConfigurationModelManager.java</div>
<svg class="i" style="left:63px;top:39px" viewBox="0 0 16 16"><use href="#chev"/></svg>
<svg class="i" style="left:83px;top:39px" viewBox="0 0 16 16"><use href="#jfile"/></svg>
<svg class="i" style="left:83px;top:39px" viewBox="0 0 16 16"><use href="#warn"/></svg>
<div class="t" style="left:103px;top:38px">ConfigurationPage.java</div>
<svg class="i" style="left:63px;top:57px" viewBox="0 0 16 16"><use href="#chev"/></svg>
<svg class="i" style="left:83px;top:57px" viewBox="0 0 16 16"><use href="#jfile"/></svg>
<svg class="i" style="left:83px;top:57px" viewBox="0 0 16 16"><use href="#warn"/></svg>
<div class="t" style="left:103px;top:56px">ConfigurationPageFactory.java</div>
<svg class="i" style="left:63px;top:75px" viewBox="0 0 16 16"><use href="#chev"/></svg>
<svg class="i" style="left:83px;top:75px" viewBox="0 0 16 16"><use href="#jfile"/></svg>
<svg class="i" style="left:83px;top:75px" viewBox="0 0 16 16"><use href="#warn"/></svg>
<div class="t" style="left:103px;top:74px">ConfigurationPageService.java</div>
<svg class="i" style="left:63px;top:93px" viewBox="0 0 16 16"><use href="#chev"/></svg>
<svg class="i" style="left:83px;top:93px" viewBox="0 0 16 16"><use href="#jfile"/></svg>
<div class="t" style="left:103px;top:92px">ConfigurationTab.java</div>
<svg class="i" style="left:83px;top:111px" viewBox="0 0 16 16"><use href="#globe"/></svg>
<div class="t" style="left:103px;top:110px">asas.jpg</div>
<svg class="i" style="left:83px;top:129px" viewBox="0 0 16 16"><use href="#globe"/></svg>
<div class="t" style="left:103px;top:128px">Capture.PNG</div>
<svg class="i" style="left:83px;top:147px" viewBox="0 0 16 16"><use href="#globe"/></svg>
<div class="t" style="left:103px;top:146px">file.jpg</div>
<svg class="i" style="left:83px;top:165px" viewBox="0 0 16 16"><use href="#globe"/></svg>
<div class="t" style="left:103px;top:164px">line.jpg</div>
<svg class="i" style="left:83px;top:183px" viewBox="0 0 16 16"><use href="#globe"/></svg>
<div class="t" style="left:103px;top:182px">line1.jpg</div>
<svg class="i" style="left:83px;top:201px" viewBox="0 0 16 16"><use href="#globe"/></svg>
<div class="t" style="left:103px;top:200px">raspberry.jpg</div>
<svg class="i" style="left:83px;top:219px" viewBox="0 0 16 16"><use href="#globe"/></svg>
<div class="t" style="left:103px;top:218px">Rover.jpg</div>
<svg class="i" style="left:44px;top:237px" viewBox="0 0 16 16"><use href="#chev"/></svg>
<svg class="i" style="left:64px;top:237px" viewBox="0 0 16 16"><use href="#pkg"/></svg>
<svg class="i" style="left:64px;top:237px" viewBox="0 0 16 16"><use href="#warn"/></svg>
<div class="t" style="left:84px;top:236px">ca.queensu.cs.rover.configuration.internal.commands</div>
<svg class="i" style="left:25px;top:255px" viewBox="0 0 16 16"><use href="#chev"/></svg>
<svg class="i" style="left:45px;top:255px" viewBox="0 0 16 16"><use href="#folder"/></svg>
<div class="t" style="left:65px;top:254px">icons</div>
<svg class="i" style="left:25px;top:273px" viewBox="0 0 16 16"><use href="#chev"/></svg>
<svg class="i" style="left:45px;top:273px" viewBox="0 0 16 16"><use href="#folder"/></svg>
<div class="t" style="left:65px;top:272px">img</div>
<svg class="i" style="left:25px;top:291px" viewBox="0 0 16 16"><use href="#chev"/></svg>
<svg class="i" style="left:45px;top:291px" viewBox="0 0 16 16"><use href="#folder"/></svg>
<div class="t" style="left:65px;top:290px">META-INF</div>
<svg class="i" style="left:25px;top:309px" viewBox="0 0 16 16"><use href="#chev"/></svg>
<svg class="i" style="left:45px;top:309px" viewBox="0 0 16 16"><use href="#folder"/></svg>
<div class="t" style="left:65px;top:308px">schema</div>
<svg class="i" style="left:45px;top:327px" viewBox="0 0 16 16"><use href="#props"/></svg>
<div class="t" style="left:65px;top:326px">build.properties</div>
<svg class="i" style="left:45px;top:345px" viewBox="0 0 16 16"><use href="#plugin"/></svg>
<div class="t" style="left:65px;top:344px">plugin.xml</div>
<svg class="i" style="left:26px;top:363px" viewBox="0 0 16 16"><use href="#projc"/></svg>
<div class="t" style="left:46px;top:362px">ca.queensu.cs.rover.model</div>
<svg class="i" style="left:26px;top:381px" viewBox="0 0 16 16"><use href="#projc"/></svg>
<div class="t" style="left:46px;top:380px">com.vogella.extensionpoint.contribution</div>
<svg class="i" style="left:26px;top:399px" viewBox="0 0 16 16"><use href="#projc"/></svg>
<div class="t" style="left:46px;top:398px">com.vogella.extensionpoint.definition</div>
<svg class="i" style="left:6px;top:417px" viewBox="0 0 16 16"><use href="#chev"/></svg>
<svg class="i" style="left:26px;top:417px" viewBox="0 0 16 16"><use href="#projo"/></svg>
<div class="t" style="left:46px;top:416px">DetectionSensor</div>
<svg class="i" style="left:6px;top:435px" viewBox="0 0 16 16"><use href="#chev"/></svg>
<svg class="i" style="left:26px;top:435px" viewBox="0 0 16 16"><use href="#projo"/></svg>
<div class="t" style="left:46px;top:434px">DetectionSensor_comp</div>
<svg class="i" style="left:6px;top:453px" viewBox="0 0 16 16"><use href="#chev"/></svg>
<svg class="i" style="left:26px;top:453px" viewBox="0 0 16 16"><use href="#projo"/></svg>
<div class="t" style="left:46px;top:452px">EngineController</div>
<svg class="i" style="left:6px;top:471px" viewBox="0 0 16 16"><use href="#chev"/></svg>
<svg class="i" style="left:26px;top:471px" viewBox="0 0 16 16"><use href="#projo"/></svg>
<div class="t" style="left:46px;top:470px">EngineController_comp</div>
<svg class="i" style="left:6px;top:489px" viewBox="0 0 16 16"><use href="#chev"/></svg>
<svg class="i" style="left:26px;top:489px" viewBox="0 0 16 16"><use href="#projo"/></svg>
<div class="t" style="left:46px;top:488px">LineFollowApp</div>
<svg class="i" style="left:6px;top:507px" viewBox="0 0 16 16"><use href="#chev"/></svg>
<svg class="i" style="left:26px;top:507px" viewBox="0 0 16 16"><use href="#projo"/></svg>
<div class="t" style="left:46px;top:506px">LineFollowApp_CDTProject</div>
<svg class="i" style="left:6px;top:525px" viewBox="0 0 16 16"><use href="#chev"/></svg>
<svg class="i" style="left:26px;top:525px" viewBox="0 0 16 16"><use href="#projo"/></svg>
<div class="t" style="left:46px;top:524px">LineFollower</div>
<svg class="i" style="left:6px;top:543px" viewBox="0 0 16 16"><use href="#chev"/></svg>
<svg class="i" style="left:26px;top:543px" viewBox="0 0 16 16"><use href="#projo"/></svg>
<div class="t" style="left:46px;top:542px">LineFollower_comp</div>
<svg class="i" style="left:6px;top:561px" viewBox="0 0 16 16"><use href="#chev"/></svg>
<svg class="i" style="left:26px;top:561px" viewBox="0 0 16 16"><use href="#projo"/></svg>
<div class="t" style="left:46px;top:560px">LineFollowingApplication</div>
<svg class="i" style="left:6px;top:579px" viewBox="0 0 16 16"><use href="#chev"/></svg>
<svg class="i" style="left:26px;top:579px" viewBox="0 0 16 16"><use href="#projj"/></svg>
<div class="t" style="left:46px;top:578px">nebula.examples.knob</div>
<svg class="i" style="left:6px;top:597px" viewBox="0 0 16 16"><use href="#chev"/></svg>
<svg class="i" style="left:26px;top:597px" viewBox="0 0 16 16"><use href="#papy"/></svg>
<div class="t" style="left:46px;top:596px">org.eclipse.papyrusrt.codegen<span class="dec"> [org.eclipse.papyrus-rt master]</span></div>
<svg class="i" style="left:26px;top:615px" viewBox="0 0 16 16"><use href="#projc"/></svg>
<div class="t" style="left:46px;top:614px">org.eclipse.papyrusrt.codegen-feature</div>
<svg class="i" style="left:6px;top:633px" viewBox="0 0 16 16"><use href="#chev"/></svg>
<svg class="i" style="left:26px;top:633px" viewBox="0 0 16 16"><use href="#papy"/></svg>
<div class="t" style="left:46px;top:632px">org.eclipse.papyrusrt.codegen.config<span class="dec"> [org.eclipse.papyrus-rt master]</span></div>
<svg class="i" style="left:6px;top:651px" viewBox="0 0 16 16"><use href="#chev"/></svg>
<svg class="i" style="left:26px;top:651px" viewBox="0 0 16 16"><use href="#papy"/></svg>
<div class="t" style="left:46px;top:650px">org.eclipse.papyrusrt.codegen.cpp<span class="dec"> [org.eclipse.papyrus-rt master]</span></div>
<svg class="i" style="left:6px;top:669px" viewBox="0 0 16 16"><use href="#chev"/></svg>
<svg class="i" style="left:26px;top:669px" viewBox="0 0 16 16"><use href="#papy2"/></svg>
<div class="t" style="left:46px;top:668px">org.eclipse.papyrusrt.codegen.cpp.capopaquebehaviour<span class="dec"> [org.eclipse.papyrus-rt master]</span></div>
<svg class="i" style="left:6px;top:687px" viewBox="0 0 16 16"><use href="#chev"/></svg>
<svg class="i" style="left:26px;top:687px" viewBox="0 0 16 16"><use href="#papy"/></svg>
<div class="t" style="left:46px;top:686px">org.eclipse.papyrusrt.codegen.cpp.profile<span class="dec"> [org.eclipse.papyrus-rt master]</span></div>
<svg class="i" style="left:6px;top:705px" viewBox="0 0 16 16"><use href="#chev"/></svg>
<svg class="i" style="left:26px;top:705px" viewBox="0 0 16 16"><use href="#papy2"/></svg>
<div class="t" style="left:46px;top:704px">org.eclipse.papyrusrt.codegen.cpp.rts<span class="dec"> [org.eclipse.papyrus-rt master]</span></div>
<svg class="i" style="left:6px;top:723px" viewBox="0 0 16 16"><use href="#chev"/></svg>
<svg class="i" style="left:26px;top:723px" viewBox="0 0 16 16"><use href="#papy"/></svg>
<div class="t" style="left:46px;top:722px">org.eclipse.papyrusrt.codegen.cpp.statemachines.flat<span class="dec"> [org.eclipse.papyrus-rt master]</span></div>
<svg class="i" style="left:6px;top:741px" viewBox="0 0 16 16"><use href="#chev"/></svg>
<svg class="i" style="left:26px;top:741px" viewBox="0 0 16 16"><use href="#papy"/></svg>
<div class="t" style="left:46px;top:740px">org.eclipse.papyrusrt.codegen.cpp.structure<span class="dec"> [org.eclipse.papyrus-rt master]</span></div>
<svg class="i" style="left:6px;top:759px" viewBox="0 0 16 16"><use href="#chev"/></svg>
<svg class="i" style="left:26px;top:759px" viewBox="0 0 16 16"><use href="#papy"/></svg>
<div class="t" style="left:46px;top:758px">org.eclipse.papyrusrt.codegen.cpp.test<span class="dec"> [org.eclipse.papyrus-rt master]</span></div>
<svg class="i" style="left:6px;top:777px" viewBox="0 0 16 16"><use href="#chev"/></svg>
<svg class="i" style="left:26px;top:777px" viewBox="0 0 16 16"><use href="#papy"/></svg>
<div class="t" style="left:46px;top:776px">org.eclipse.papyrusrt.codegen.lang<span class="dec"> [org.eclipse.papyrus-rt master]</span></div>
<svg class="i" style="left:6px;top:795px" viewBox="0 0 16 16"><use href="#chev"/></svg>
<svg class="i" style="left:26px;top:795px" viewBox="0 0 16 16"><use href="#papy"/></svg>
<div class="t" style="left:46px;top:794px">org.eclipse.papyrusrt.codegen.lang.cpp<span class="dec"> [org.eclipse.papyrus-rt master]</span></div>
<svg class="i" style="left:6px;top:813px" viewBox="0 0 16 16"><use href="#chev"/></svg>
<svg class="i" style="left:26px;top:813px" viewBox="0 0 16 16"><use href="#papy"/></svg>
<div class="t" style="left:46px;top:812px">org.eclipse.papyrusrt.codegen.lang.cpp.test<span class="dec"> [org.eclipse.papyrus-rt master]</span></div>
<svg class="i" style="left:6px;top:831px" viewBox="0 0 16 16"><use href="#chev"/></svg>
<svg class="i" style="left:26px;top:831px" viewBox="0 0 16 16"><use href="#papy"/></svg>
<div class="t" style="left:46px;top:830px">org.eclipse.papyrusrt.codegen.lang.test<span class="dec"> [org.eclipse.papyrus-rt master]</span></div>
<svg class="i" style="left:6px;top:849px" viewBox="0 0 16 16"><use href="#chev"/></svg>
<svg class="i" style="left:26px;top:849px" viewBox="0 0 16 16"><use href="#papy"/></svg>
<div class="t" style="left:46px;top:848px">org.eclipse.papyrusrt.codegen.papyrus<span class="dec"> [org.eclipse.papyrus-rt master]</span></div>
<svg class="i" style="left:6px;top:867px" viewBox="0 0 16 16"><use href="#chev"/></svg>
<svg class="i" style="left:26px;top:867px" viewBox="0 0 16 16"><use href="#papy"/></svg>
<div class="t" style="left:46px;top:866px">org.eclipse.papyrusrt.codegen.standalone<span class="dec"> [org.eclipse.papyrus-rt master]</span></div>
<svg class="i" style="left:6px;top:885px" viewBox="0 0 16 16"><use href="#chev"/></svg>
<svg class="i" style="left:26px;top:885px" viewBox="0 0 16 16"><use href="#papy"/></svg>
<div class="t" style="left:46px;top:884px">org.eclipse.papyrusrt.codegen.x<span class="dec"> [org.eclipse.papyrus-rt master]</span></div>
</div>
<div class="a" style="left:485px;top:106px;width:16px;height:886px;background:#F0F0F0"></div>
<div class="a" style="left:485px;top:204px;width:15px;height:266px;background:#CDCDCD"></div>
<svg class="a" style="left:487px;top:110px" width="11" height="11" viewBox="0 0 11 11"><path d="M1.5 7.5 L5.5 3.5 L9.5 7.5" fill="none" stroke="#505050" stroke-width="2"/></svg>
<svg class="a" style="left:487px;top:977px" width="11" height="11" viewBox="0 0 11 11"><path d="M1.5 3.5 L5.5 7.5 L9.5 3.5" fill="none" stroke="#505050" stroke-width="2"/></svg>
<div class="a" style="left:6px;top:992px;width:479px;height:16px;background:#F0F0F0"></div>
<div class="a" style="left:23px;top:992px;width:419px;height:15px;background:#CDCDCD"></div>
<svg class="a" style="left:9px;top:994px" width="11" height="11" viewBox="0 0 11 11"><path d="M7.5 1.5 L3.5 5.5 L7.5 9.5" fill="none" stroke="#505050" stroke-width="2"/></svg>
<svg class="a" style="left:471px;top:994px" width="11" height="11" viewBox="0 0 11 11"><path d="M3.5 1.5 L7.5 5.5 L3.5 9.5" fill="none" stroke="#505050" stroke-width="2"/></svg>
<div class="a" style="left:508px;top:78px;width:1376px;height:933px;background:#fff;border:1px solid #B6BCCC;border-radius:6px 6px 5px 5px"></div>
<div class="a" style="left:509px;top:79px;width:1374px;height:25px;background:#D2E1F0;border-bottom:1px solid #B6BCCC;border-radius:5px 5px 0 0"></div>
<div class="a" style="left:1670px;top:78px;width:152px;height:26px;background:#fff;border:1px solid #B6BCCC;border-bottom:none;border-radius:6px 6px 0 0"></div>
<svg class="i" style="left:514px;top:84px" viewBox="0 0 16 16"><use href="#jfile"/></svg>
<svg class="i" style="left:514px;top:84px" viewBox="0 0 16 16"><use href="#warn"/></svg>
<div class="t" style="left:532px;top:83px">ConfigurationP...</div>
<svg class="i" style="left:659px;top:84px" viewBox="0 0 16 16"><use href="#jfile"/></svg>
<svg class="i" style="left:659px;top:84px" viewBox="0 0 16 16"><use href="#warn"/></svg>
<div class="t" style="left:676px;top:83px">ConfigurationM...</div>
<svg class="i" style="left:803px;top:84px" viewBox="0 0 16 16"><use href="#jfile"/></svg>
<svg class="i" style="left:803px;top:84px" viewBox="0 0 16 16"><use href="#warn"/></svg>
<div class="t" style="left:820px;top:83px">ConfigurationP...</div>
<svg class="i" style="left:948px;top:84px" viewBox="0 0 16 16"><use href="#jfile"/></svg>
<div class="t" style="left:964px;top:83px">ConfigurationT...</div>
<svg class="i" style="left:1090px;top:84px" viewBox="0 0 16 16"><use href="#plugin"/></svg>
<div class="t" style="left:1108px;top:83px">ca.queensu.cs.r...</div>
<svg class="i" style="left:1236px;top:84px" viewBox="0 0 16 16"><use href="#jfile"/></svg>
<svg class="i" style="left:1236px;top:84px" viewBox="0 0 16 16"><use href="#warn"/></svg>
<div class="t" style="left:1254px;top:83px">*EngineControll...</div>
<svg class="i" style="left:1384px;top:84px" viewBox="0 0 16 16"><use href="#jfile"/></svg>
<svg class="i" style="left:1384px;top:84px" viewBox="0 0 16 16"><use href="#warn"/></svg>
<div class="t" style="left:1402px;top:83px">ConfigurationP...</div>
<svg class="i" style="left:1529px;top:84px" viewBox="0 0 16 16"><use href="#jfile"/></svg>
<svg class="i" style="left:1529px;top:84px" viewBox="0 0 16 16"><use href="#warn"/></svg>
<div class="t" style="left:1546px;top:83px">DetectionSensor....</div>
<svg class="i" style="left:1675px;top:84px" viewBox="0 0 16 16"><use href="#jfile"/></svg>
<div class="t" style="left:1693px;top:83px">*KnobExample.java</div>
<svg class="a" style="left:1802px;top:86px" width="11" height="11" viewBox="0 0 11 11"><path d="M1 1 L4 1 L5.5 3 L7 1 H10 L7 5.5 L10 10 H7 L5.5 8 L4 10 H1 L4 5.5 Z" fill="#fff" stroke="#6A6A6A" stroke-width="0.9" stroke-linejoin="round"/></svg>
<div class="a" style="left:1836px;top:86px;width:10px;height:4px;border:1px solid #5A5A5A;background:#fff"></div>
<svg class="a" style="left:1858px;top:85px" width="10" height="10" viewBox="0 0 10 10"><rect x="3.5" y="0.5" width="6" height="5" fill="#fff" stroke="#5A4E44"/><rect x="3.5" y="0.5" width="6" height="1.6" fill="#5A4E44"/><rect x="0.5" y="4.5" width="6" height="5" fill="#fff" stroke="#5A4E44"/><rect x="0.5" y="4.5" width="6" height="1.6" fill="#5A4E44"/></svg>
<div class="a" style="left:511px;top:106px;width:12px;height:886px;background:#F8F8F8"></div>
<div class="a" style="left:546px;top:106px;width:1px;height:886px;background:#F4F4F4"></div>
<div class="a" style="left:511px;top:346px;width:12px;height:555px;background:repeating-conic-gradient(#0073DD 0 25%,#fff 0 50%) 0 0/2px 2px"></div>
<div class="a" style="left:511px;top:346px;width:12px;height:1px;background:#0073DD"></div>
<div class="a" style="left:523px;top:645px;width:14px;height:2px;background:#000"></div>
<div class="a" style="left:548px;top:511px;width:1303px;height:15px;background:#E8F2FE"></div>
<div class="code"><div><span class="k">package</span> org.eclipse.nebula.snippets.visualization;</div><div></div><div><span class="k">import</span> org.eclipse.draw2d.ColorConstants;</div><div><span class="k">import</span> org.eclipse.draw2d.LightweightSystem;</div><div><span class="k">import</span> <span class="sq">org.eclipse.nebula.visualization</span>.widgets.datadefinition.IManualValueChangeListener;</div><div><span class="k">import</span> <span class="sq">org.eclipse.nebula.visualization</span>.widgets.figures.KnobFigure;</div><div><span class="k">import</span> org.eclipse.swt.widgets.Display;</div><div><span class="k">import</span> org.eclipse.swt.widgets.Shell;</div><div></div><div></div><div><span class="jd">/**</span></div><div><span class="jd"> * A live updated Gauge Example.</span></div><div><span class="jd"> * <span class="jt">@author</span> <span class="sq">Xihui</span> <span class="sq">Chen</span></span></div><div><span class="jd"> *</span></div><div><span class="jd"> */</span></div><div><span class="k">public</span> <span class="k">class</span> KnobExample {</div><div>    <span class="k">public</span> <span class="k">static</span> <span class="k">void</span> main(String[] <span class="l">args</span>) {</div><div>        <span class="k">final</span> Shell <span class="l">shell</span> = <span class="k">new</span> Shell();</div><div>        <span class="l">shell</span>.setSize(300, 250);</div><div>        <span class="l">shell</span>.open();</div><div></div><div>        <span class="c">//use LightweightSystem to create the bridge between SWT and draw2D</span></div><div>        <span class="k">final</span> LightweightSystem <span class="l">lws</span> = <span class="k">new</span> LightweightSystem(<span class="l">shell</span>);</div><div></div><div>        <span class="c">//Create Knob</span></div><div>        <span class="k">final</span> <span class="sq">KnobFigure</span> <span class="l">knobFigure</span> = <span class="k">new</span> <span class="sq">KnobFigure</span>();</div><div></div><div>        <span class="c">//<span class="sq">Init</span> Knob</span></div><div>        <span class="l">knobFigure</span>.setRange(-100, 100);</div><div>        <span class="l">knobFigure</span>.setLoLevel(-50);</div><div>        <span class="l">knobFigure</span>.setLoloLevel(-80);</div><div>        <span class="l">knobFigure</span>.setHiLevel(60);</div><div>        <span class="l">knobFigure</span>.setHihiLevel(80);</div><div>        <span class="l">knobFigure</span>.setMajorTickMarkStepHint(50);</div><div>        <span class="l">knobFigure</span>.setThumbColor(ColorConstants.<span class="sf">gray</span>);</div><div>        <span class="l">knobFigure</span>.addManualValueChangeListener(<span class="k">new</span> <span class="sq">IManualValueChangeListener</span>() {</div><div>            <span class="k">public</span> <span class="k">void</span> manualValueChanged(<span class="k">double</span> <span class="l">newValue</span>) {</div><div>                System.<span class="sf">out</span>.println(<span class="s">"You set value to: "</span> + <span class="l">newValue</span>);</div><div>            }</div><div>        });</div><div></div><div>        <span class="l">lws</span>.setContents(<span class="l">knobFigure</span>);</div><div></div><div></div><div>        Display <span class="l">display</span> = Display.<span class="sm">getDefault</span>();</div><div>        <span class="k">while</span> (!<span class="l">shell</span>.isDisposed()) {</div><div>            <span class="k">if</span> (!<span class="l">display</span>.readAndDispatch()) {</div><div>                <span class="l">display</span>.sleep();</div><div>            }</div><div>        }</div><div></div><div></div><div>    }</div><div>}</div><div></div><div></div></div>
<div class="ln" style="top:108px">1</div>
<div class="ln" style="top:123px">2</div>
<div class="ln" style="top:138px">3</div>
<div class="ln" style="top:153px">4</div>
<div class="ln" style="top:168px">5</div>
<div class="ln" style="top:183px">6</div>
<div class="ln" style="top:198px">7</div>
<div class="ln" style="top:213px">8</div>
<div class="ln" style="top:228px">9</div>
<div class="ln" style="top:243px">10</div>
<div class="ln" style="top:258px">11</div>
<div class="ln" style="top:273px">12</div>
<div class="ln" style="top:288px">13</div>
<div class="ln" style="top:303px">14</div>
<div class="ln" style="top:318px">15</div>
<div class="ln" style="top:333px">16</div>
<div class="ln" style="top:348px">17</div>
<div class="ln" style="top:363px">18</div>
<div class="ln" style="top:378px">19</div>
<div class="ln" style="top:393px">20</div>
<div class="ln" style="top:408px">21</div>
<div class="ln" style="top:423px">22</div>
<div class="ln" style="top:438px">23</div>
<div class="ln" style="top:453px">24</div>
<div class="ln" style="top:468px">25</div>
<div class="ln" style="top:483px">26</div>
<div class="ln" style="top:498px">27</div>
<div class="ln" style="top:513px">28</div>
<div class="ln" style="top:528px">29</div>
<div class="ln" style="top:543px">30</div>
<div class="ln" style="top:558px">31</div>
<div class="ln" style="top:573px">32</div>
<div class="ln" style="top:588px">33</div>
<div class="ln" style="top:603px">34</div>
<div class="ln" style="top:618px">35</div>
<div class="ln" style="top:633px">36</div>
<div class="ln" style="top:648px">37</div>
<div class="ln" style="top:663px">38</div>
<div class="ln" style="top:678px">39</div>
<div class="ln" style="top:693px">40</div>
<div class="ln" style="top:708px">41</div>
<div class="ln" style="top:723px">42</div>
<div class="ln" style="top:738px">43</div>
<div class="ln" style="top:753px">44</div>
<div class="ln" style="top:768px">45</div>
<div class="ln" style="top:783px">46</div>
<div class="ln" style="top:798px">47</div>
<div class="ln" style="top:813px">48</div>
<div class="ln" style="top:828px">49</div>
<div class="ln" style="top:843px">50</div>
<div class="ln" style="top:858px">51</div>
<div class="ln" style="top:873px">52</div>
<div class="ln" style="top:888px">53</div>
<div class="ln" style="top:903px">54</div>
<div class="ln" style="top:918px">55</div>
<div class="a" style="left:682px;top:511px;width:2px;height:15px;background:#000"></div>
<svg class="a" style="left:598px;top:178px" width="226" height="4"><polyline points="0.5,2.5 2.5,0.5 4.5,2.5 6.5,0.5 8.5,2.5 10.5,0.5 12.5,2.5 14.5,0.5 16.5,2.5 18.5,0.5 20.5,2.5 22.5,0.5 24.5,2.5 26.5,0.5 28.5,2.5 30.5,0.5 32.5,2.5 34.5,0.5 36.5,2.5 38.5,0.5 40.5,2.5 42.5,0.5 44.5,2.5 46.5,0.5 48.5,2.5 50.5,0.5 52.5,2.5 54.5,0.5 56.5,2.5 58.5,0.5 60.5,2.5 62.5,0.5 64.5,2.5 66.5,0.5 68.5,2.5 70.5,0.5 72.5,2.5 74.5,0.5 76.5,2.5 78.5,0.5 80.5,2.5 82.5,0.5 84.5,2.5 86.5,0.5 88.5,2.5 90.5,0.5 92.5,2.5 94.5,0.5 96.5,2.5 98.5,0.5 100.5,2.5 102.5,0.5 104.5,2.5 106.5,0.5 108.5,2.5 110.5,0.5 112.5,2.5 114.5,0.5 116.5,2.5 118.5,0.5 120.5,2.5 122.5,0.5 124.5,2.5 126.5,0.5 128.5,2.5 130.5,0.5 132.5,2.5 134.5,0.5 136.5,2.5 138.5,0.5 140.5,2.5 142.5,0.5 144.5,2.5 146.5,0.5 148.5,2.5 150.5,0.5 152.5,2.5 154.5,0.5 156.5,2.5 158.5,0.5 160.5,2.5 162.5,0.5 164.5,2.5 166.5,0.5 168.5,2.5 170.5,0.5 172.5,2.5 174.5,0.5 176.5,2.5 178.5,0.5 180.5,2.5 182.5,0.5 184.5,2.5 186.5,0.5 188.5,2.5 190.5,0.5 192.5,2.5 194.5,0.5 196.5,2.5 198.5,0.5 200.5,2.5 202.5,0.5 204.5,2.5 206.5,0.5 208.5,2.5 210.5,0.5 212.5,2.5 214.5,0.5 216.5,2.5 218.5,0.5 220.5,2.5 222.5,0.5 224.5,2.5" fill="none" stroke="#FF0080" stroke-width="1"/></svg>
<svg class="a" style="left:598px;top:193px" width="226" height="4"><polyline points="0.5,2.5 2.5,0.5 4.5,2.5 6.5,0.5 8.5,2.5 10.5,0.5 12.5,2.5 14.5,0.5 16.5,2.5 18.5,0.5 20.5,2.5 22.5,0.5 24.5,2.5 26.5,0.5 28.5,2.5 30.5,0.5 32.5,2.5 34.5,0.5 36.5,2.5 38.5,0.5 40.5,2.5 42.5,0.5 44.5,2.5 46.5,0.5 48.5,2.5 50.5,0.5 52.5,2.5 54.5,0.5 56.5,2.5 58.5,0.5 60.5,2.5 62.5,0.5 64.5,2.5 66.5,0.5 68.5,2.5 70.5,0.5 72.5,2.5 74.5,0.5 76.5,2.5 78.5,0.5 80.5,2.5 82.5,0.5 84.5,2.5 86.5,0.5 88.5,2.5 90.5,0.5 92.5,2.5 94.5,0.5 96.5,2.5 98.5,0.5 100.5,2.5 102.5,0.5 104.5,2.5 106.5,0.5 108.5,2.5 110.5,0.5 112.5,2.5 114.5,0.5 116.5,2.5 118.5,0.5 120.5,2.5 122.5,0.5 124.5,2.5 126.5,0.5 128.5,2.5 130.5,0.5 132.5,2.5 134.5,0.5 136.5,2.5 138.5,0.5 140.5,2.5 142.5,0.5 144.5,2.5 146.5,0.5 148.5,2.5 150.5,0.5 152.5,2.5 154.5,0.5 156.5,2.5 158.5,0.5 160.5,2.5 162.5,0.5 164.5,2.5 166.5,0.5 168.5,2.5 170.5,0.5 172.5,2.5 174.5,0.5 176.5,2.5 178.5,0.5 180.5,2.5 182.5,0.5 184.5,2.5 186.5,0.5 188.5,2.5 190.5,0.5 192.5,2.5 194.5,0.5 196.5,2.5 198.5,0.5 200.5,2.5 202.5,0.5 204.5,2.5 206.5,0.5 208.5,2.5 210.5,0.5 212.5,2.5 214.5,0.5 216.5,2.5 218.5,0.5 220.5,2.5 222.5,0.5 224.5,2.5" fill="none" stroke="#FF0080" stroke-width="1"/></svg>
<svg class="a" style="left:626px;top:298px" width="37" height="4"><polyline points="0.5,2.5 2.5,0.5 4.5,2.5 6.5,0.5 8.5,2.5 10.5,0.5 12.5,2.5 14.5,0.5 16.5,2.5 18.5,0.5 20.5,2.5 22.5,0.5 24.5,2.5 26.5,0.5 28.5,2.5 30.5,0.5 32.5,2.5 34.5,0.5" fill="none" stroke="#FF7A40" stroke-width="1"/></svg>
<svg class="a" style="left:668px;top:298px" width="30" height="4"><polyline points="0.5,2.5 2.5,0.5 4.5,2.5 6.5,0.5 8.5,2.5 10.5,0.5 12.5,2.5 14.5,0.5 16.5,2.5 18.5,0.5 20.5,2.5 22.5,0.5 24.5,2.5 26.5,0.5 28.5,2.5" fill="none" stroke="#FF7A40" stroke-width="1"/></svg>
<svg class="a" style="left:647px;top:493px" width="72" height="4"><polyline points="0.5,2.5 2.5,0.5 4.5,2.5 6.5,0.5 8.5,2.5 10.5,0.5 12.5,2.5 14.5,0.5 16.5,2.5 18.5,0.5 20.5,2.5 22.5,0.5 24.5,2.5 26.5,0.5 28.5,2.5 30.5,0.5 32.5,2.5 34.5,0.5 36.5,2.5 38.5,0.5 40.5,2.5 42.5,0.5 44.5,2.5 46.5,0.5 48.5,2.5 50.5,0.5 52.5,2.5 54.5,0.5 56.5,2.5 58.5,0.5 60.5,2.5 62.5,0.5 64.5,2.5 66.5,0.5 68.5,2.5 70.5,0.5" fill="none" stroke="#FF0080" stroke-width="1"/></svg>
<svg class="a" style="left:843px;top:493px" width="72" height="4"><polyline points="0.5,2.5 2.5,0.5 4.5,2.5 6.5,0.5 8.5,2.5 10.5,0.5 12.5,2.5 14.5,0.5 16.5,2.5 18.5,0.5 20.5,2.5 22.5,0.5 24.5,2.5 26.5,0.5 28.5,2.5 30.5,0.5 32.5,2.5 34.5,0.5 36.5,2.5 38.5,0.5 40.5,2.5 42.5,0.5 44.5,2.5 46.5,0.5 48.5,2.5 50.5,0.5 52.5,2.5 54.5,0.5 56.5,2.5 58.5,0.5 60.5,2.5 62.5,0.5 64.5,2.5 66.5,0.5 68.5,2.5 70.5,0.5" fill="none" stroke="#FF0080" stroke-width="1"/></svg>
<svg class="a" style="left:619px;top:523px" width="30" height="4"><polyline points="0.5,2.5 2.5,0.5 4.5,2.5 6.5,0.5 8.5,2.5 10.5,0.5 12.5,2.5 14.5,0.5 16.5,2.5 18.5,0.5 20.5,2.5 22.5,0.5 24.5,2.5 26.5,0.5 28.5,2.5" fill="none" stroke="#FF7A40" stroke-width="1"/></svg>
<svg class="a" style="left:913px;top:643px" width="184" height="4"><polyline points="0.5,2.5 2.5,0.5 4.5,2.5 6.5,0.5 8.5,2.5 10.5,0.5 12.5,2.5 14.5,0.5 16.5,2.5 18.5,0.5 20.5,2.5 22.5,0.5 24.5,2.5 26.5,0.5 28.5,2.5 30.5,0.5 32.5,2.5 34.5,0.5 36.5,2.5 38.5,0.5 40.5,2.5 42.5,0.5 44.5,2.5 46.5,0.5 48.5,2.5 50.5,0.5 52.5,2.5 54.5,0.5 56.5,2.5 58.5,0.5 60.5,2.5 62.5,0.5 64.5,2.5 66.5,0.5 68.5,2.5 70.5,0.5 72.5,2.5 74.5,0.5 76.5,2.5 78.5,0.5 80.5,2.5 82.5,0.5 84.5,2.5 86.5,0.5 88.5,2.5 90.5,0.5 92.5,2.5 94.5,0.5 96.5,2.5 98.5,0.5 100.5,2.5 102.5,0.5 104.5,2.5 106.5,0.5 108.5,2.5 110.5,0.5 112.5,2.5 114.5,0.5 116.5,2.5 118.5,0.5 120.5,2.5 122.5,0.5 124.5,2.5 126.5,0.5 128.5,2.5 130.5,0.5 132.5,2.5 134.5,0.5 136.5,2.5 138.5,0.5 140.5,2.5 142.5,0.5 144.5,2.5 146.5,0.5 148.5,2.5 150.5,0.5 152.5,2.5 154.5,0.5 156.5,2.5 158.5,0.5 160.5,2.5 162.5,0.5 164.5,2.5 166.5,0.5 168.5,2.5 170.5,0.5 172.5,2.5 174.5,0.5 176.5,2.5 178.5,0.5 180.5,2.5 182.5,0.5" fill="none" stroke="#FF0080" stroke-width="1"/></svg>
<svg class="a" style="left:537px;top:139px" width="10" height="10" viewBox="0 0 10 10"><use href="#fold"/></svg>
<svg class="a" style="left:537px;top:259px" width="10" height="10" viewBox="0 0 10 10"><use href="#fold"/></svg>
<svg class="a" style="left:537px;top:349px" width="10" height="10" viewBox="0 0 10 10"><use href="#fold"/></svg>
<svg class="a" style="left:537px;top:634px" width="10" height="10" viewBox="0 0 10 10"><use href="#fold"/></svg>
<svg class="a" style="left:537px;top:649px" width="10" height="10" viewBox="0 0 10 10"><use href="#fold"/></svg>
<svg class="i" style="left:511px;top:166px" viewBox="0 0 16 16"><use href="#errq"/></svg>
<svg class="i" style="left:511px;top:181px" viewBox="0 0 16 16"><use href="#errq"/></svg>
<svg class="i" style="left:511px;top:481px" viewBox="0 0 16 16"><use href="#errq"/></svg>
<svg class="i" style="left:511px;top:631px" viewBox="0 0 16 16"><use href="#errq"/></svg>
<div class="a" style="left:1852px;top:106px;width:16px;height:902px;background:#F0F0F0"></div>
<div class="a" style="left:1868px;top:104px;width:14px;height:904px;background:#F8F8F8"></div>
<svg class="a" style="left:1854px;top:110px" width="11" height="11" viewBox="0 0 11 11"><path d="M1.5 7.5 L5.5 3.5 L9.5 7.5" fill="none" stroke="#BDBDBD" stroke-width="2"/></svg>
<svg class="a" style="left:1854px;top:977px" width="11" height="11" viewBox="0 0 11 11"><path d="M1.5 3.5 L5.5 7.5 L9.5 3.5" fill="none" stroke="#BDBDBD" stroke-width="2"/></svg>
<div class="a" style="left:1870px;top:110px;width:8px;height:8px;background:#F0007F;border:1px solid #A08090"></div>
<div class="a" style="left:1868px;top:122px;width:12px;height:1px;background:#9A9A9A"></div>
<div class="a" style="left:1870px;top:172px;width:9px;height:5px;background:#F8B8D8;border:1px solid #E8409A"></div>
<div class="a" style="left:1870px;top:187px;width:9px;height:5px;background:#F8B8D8;border:1px solid #E8409A"></div>
<div class="a" style="left:1870px;top:486px;width:9px;height:5px;background:#F8B8D8;border:1px solid #E8409A"></div>
<div class="a" style="left:1870px;top:636px;width:9px;height:5px;background:#F8B8D8;border:1px solid #E8409A"></div>
<div class="a" style="left:548px;top:992px;width:1304px;height:16px;background:#F0F0F0"></div>
<svg class="a" style="left:550px;top:994px" width="11" height="11" viewBox="0 0 11 11"><path d="M7.5 1.5 L3.5 5.5 L7.5 9.5" fill="none" stroke="#BDBDBD" stroke-width="2"/></svg>
<svg class="a" style="left:1838px;top:994px" width="11" height="11" viewBox="0 0 11 11"><path d="M3.5 1.5 L7.5 5.5 L3.5 9.5" fill="none" stroke="#BDBDBD" stroke-width="2"/></svg>
<div class="a" style="left:509px;top:992px;width:39px;height:16px;background:#F8F8F8"></div>
<div class="a" style="left:1888px;top:78px;width:31px;height:58px;background:#E1E6F6;border:1px solid #A8B0C8;border-radius:4px 4px 7px 7px;box-shadow:inset 0 0 0 1px #fff"></div>
<svg class="a" style="left:1897px;top:84px" width="14" height="3" viewBox="0 0 14 3"><rect x="0" y="0" width="2" height="2" fill="#A8A088"/><rect x="4" y="0" width="2" height="2" fill="#A8A088"/><rect x="8" y="0" width="2" height="2" fill="#A8A088"/><rect x="12" y="0" width="2" height="2" fill="#A8A088"/></svg>
<svg class="a" style="left:1899px;top:95px" width="10" height="10" viewBox="0 0 10 10"><rect x="3.5" y="0.5" width="6" height="5" fill="#fff" stroke="#5A4E44"/><rect x="3.5" y="0.5" width="6" height="1.6" fill="#5A4E44"/><rect x="0.5" y="4.5" width="6" height="5" fill="#fff" stroke="#5A4E44"/><rect x="0.5" y="4.5" width="6" height="1.6" fill="#5A4E44"/></svg>
<div class="a" style="left:1888px;top:137px;width:31px;height:59px;background:#E1E6F6;border:1px solid #A8B0C8;border-radius:4px 4px 7px 7px;box-shadow:inset 0 0 0 1px #fff"></div>
<svg class="a" style="left:1897px;top:143px" width="14" height="3" viewBox="0 0 14 3"><rect x="0" y="0" width="2" height="2" fill="#A8A088"/><rect x="4" y="0" width="2" height="2" fill="#A8A088"/><rect x="8" y="0" width="2" height="2" fill="#A8A088"/><rect x="12" y="0" width="2" height="2" fill="#A8A088"/></svg>
<svg class="a" style="left:1899px;top:154px" width="10" height="10" viewBox="0 0 10 10"><rect x="3.5" y="0.5" width="6" height="5" fill="#fff" stroke="#5A4E44"/><rect x="3.5" y="0.5" width="6" height="1.6" fill="#5A4E44"/><rect x="0.5" y="4.5" width="6" height="5" fill="#fff" stroke="#5A4E44"/><rect x="0.5" y="4.5" width="6" height="1.6" fill="#5A4E44"/></svg>
<div class="a" style="left:1888px;top:197px;width:31px;height:146px;background:#E1E6F6;border:1px solid #A8B0C8;border-radius:4px 4px 7px 7px;box-shadow:inset 0 0 0 1px #fff"></div>
<svg class="a" style="left:1897px;top:203px" width="14" height="3" viewBox="0 0 14 3"><rect x="0" y="0" width="2" height="2" fill="#A8A088"/><rect x="4" y="0" width="2" height="2" fill="#A8A088"/><rect x="8" y="0" width="2" height="2" fill="#A8A088"/><rect x="12" y="0" width="2" height="2" fill="#A8A088"/></svg>
<svg class="a" style="left:1899px;top:214px" width="10" height="10" viewBox="0 0 10 10"><rect x="3.5" y="0.5" width="6" height="5" fill="#fff" stroke="#5A4E44"/><rect x="3.5" y="0.5" width="6" height="1.6" fill="#5A4E44"/><rect x="0.5" y="4.5" width="6" height="5" fill="#fff" stroke="#5A4E44"/><rect x="0.5" y="4.5" width="6" height="1.6" fill="#5A4E44"/></svg>
<svg class="a" style="left:1896px;top:114px" width="16" height="16" viewBox="0 0 16 16"><path d="M3.5 1.5 H12.5 V14.5 L10.5 13 L8 14.5 L5.5 13 L3.5 14.5 Z" fill="#F4F4FA" stroke="#3A3A3A"/><rect x="4" y="10" width="8" height="3" fill="#B8B8E0"/><path d="M5.5 4 H10.5 M5.5 6 H10.5 M5.5 8 H10.5 M5.5 10 H10.5" stroke="#3A3A3A" stroke-width="0.8"/></svg>
<svg class="a" style="left:1896px;top:174px" width="16" height="16" viewBox="0 0 16 16"><rect x="1.5" y="1.5" width="5" height="5" fill="#fff" stroke="#2A7AC8"/><rect x="1.5" y="9.5" width="5" height="5" fill="#fff" stroke="#2A7AC8"/><rect x="8" y="6" width="2" height="2" fill="#2A7AC8"/><path d="M8 3.5 H15 M11 7 H15 M8 12 H15" stroke="#2A7AC8"/></svg>
<svg class="a" style="left:1896px;top:230px" width="16" height="16" viewBox="0 0 16 16"><rect x="0.5" y="0.5" width="9" height="15" fill="#F4E8E8" stroke="#C8A878"/><circle cx="6" cy="5" r="2.5" fill="#E02030"/><rect x="0" y="9" width="6" height="6" fill="#E02030"/><path d="M1.5 10.5 L4.5 13.5 M4.5 10.5 L1.5 13.5" stroke="#fff"/><path d="M10 1 Q14 1 13 5 Q12 8 13 15" fill="none" stroke="#7A90B8"/></svg>
<div class="t" style="left:1897px;top:250px;color:#2A6AB8;font-weight:bold;font-style:italic;font-size:13px">@</div>
<svg class="a" style="left:1896px;top:275px" width="16" height="16" viewBox="0 0 16 16"><path d="M1.5 0.5 H9 L12 3.5 V13 H1.5 Z" fill="#F6F0E0" stroke="#B89040"/><text x="3" y="10" font-family="Liberation Mono" font-size="8" fill="#2A5AA8">{}</text><path d="M9 10 H13 V8 L16 11.5 L13 15 V13 H9Z" fill="#F8C860" stroke="#C88820" stroke-width="0.8"/></svg>
<svg class="i" style="left:1896px;top:297px;width:16px;height:16px" viewBox="0 0 16 16"><use href="#tb_search"/></svg>
<svg class="a" style="left:1896px;top:319px" width="16" height="16" viewBox="0 0 16 16"><rect x="1.5" y="1.5" width="13" height="10" rx="1" fill="#2A6AB8" stroke="#1A4A90"/><rect x="3" y="3" width="10" height="7" fill="#E8F0FA"/><path d="M4.5 5.5 H10 M4.5 7.5 H8" stroke="#2A6AB8"/><rect x="5" y="12" width="6" height="2" fill="#2A6AB8"/></svg>
<div class="a" style="left:1151px;top:1014px;width:1px;height:22px;background:#A0A0A0;box-shadow:1px 0 0 #fff"></div>
<div class="a" style="left:1255px;top:1014px;width:1px;height:22px;background:#A0A0A0;box-shadow:1px 0 0 #fff"></div>
<div class="a" style="left:1354px;top:1014px;width:1px;height:22px;background:#A0A0A0;box-shadow:1px 0 0 #fff"></div>
<div class="t" style="left:1159px;top:1016px">Writable</div>
<div class="t" style="left:1263px;top:1016px">Smart Insert</div>
<div class="t" style="left:1361px;top:1016px">28 : 20</div>
<div class="a" style="left:1451px;top:1014px;width:30px;height:22px;border:1px solid #B0B8C8;border-right-color:#8A90A0;border-bottom-color:#8A90A0"></div>
<svg class="a" style="left:1456px;top:1017px" width="18" height="17" viewBox="0 0 18 17"><rect x="7" y="6" width="9" height="7" fill="#B8D0F0" stroke="#4A70B0"/><circle cx="5" cy="12" r="3.5" fill="#F0F0D0" stroke="#B8A040"/><path d="M2 6 Q3 1 9 2 L9 0 L12 3 L9 6 V4 Q5 3.5 4 6Z" fill="#F8C040" stroke="#C88820" stroke-width="0.7"/></svg>
<svg class="a" style="left:1482px;top:1015px" width="4" height="20" viewBox="0 0 4 20"><rect x="1" y="1" width="2" height="2" fill="#A09A88"/><rect x="1" y="6" width="2" height="2" fill="#A09A88"/><rect x="1" y="11" width="2" height="2" fill="#A09A88"/><rect x="1" y="16" width="2" height="2" fill="#A09A88"/></svg>
<svg class="a" style="left:1767px;top:1015px" width="4" height="20" viewBox="0 0 4 20"><rect x="1" y="1" width="2" height="2" fill="#A09A88"/><rect x="1" y="6" width="2" height="2" fill="#A09A88"/><rect x="1" y="11" width="2" height="2" fill="#A09A88"/><rect x="1" y="16" width="2" height="2" fill="#A09A88"/></svg>
<div class="a" style="left:1772px;top:1015px;width:125px;height:24px;border-top:1px solid #9A9A9A;border-left:1px solid #D8DCE8;border-right:1px solid #9A9A9A"></div>
<svg class="a" style="left:1776px;top:1018px" width="18" height="16" viewBox="0 0 18 16"><path d="M1 8 L7 3 H12 L14 6 V13 H6 Z" fill="#E8E0D0" stroke="#6A6A6A"/><rect x="9" y="7" width="7" height="7" fill="#F0B030" stroke="#A07010"/></svg>
<div class="a" style="left:1798px;top:1018px;width:1px;height:18px;background:#6A6A6A"></div>
<svg class="a" style="left:1807px;top:1020px" width="16" height="16" viewBox="0 0 16 16"><path d="M1.5 3 L5.5 1.5 L10.5 3 L14.5 1.5 V13 L10.5 14.5 L5.5 13 L1.5 14.5 Z M5.5 1.5 V13 M10.5 3 V14.5" fill="none" stroke="#F0A040" stroke-width="1.2"/></svg>
<svg class="a" style="left:1830px;top:1019px" width="16" height="16" viewBox="0 0 16 16"><path d="M0.5 6 L8 2.5 L15.5 6 L8 9.5 Z" fill="#F09A30"/><path d="M3.5 8 V12 Q8 14.5 12.5 12 V8 L8 10.5 Z" fill="#F09A30"/></svg>
<svg class="a" style="left:1854px;top:1019px" width="16" height="16" viewBox="0 0 16 16"><path d="M2 14.5 L12 4.5" stroke="#F09A30" stroke-width="2.5"/><circle cx="4" cy="3" r="1" fill="#F09A30"/><circle cx="13" cy="10" r="0.8" fill="#F09A30"/></svg>
<svg class="a" style="left:1877px;top:1019px" width="16" height="16" viewBox="0 0 16 16"><circle cx="8" cy="8" r="6.5" fill="none" stroke="#F0A050" stroke-width="1.2"/><path d="M8 3.5 L9.3 6.5 L12.5 6.8 L10 9 L10.8 12 L8 10.3 L5.2 12 L6 9 L3.5 6.8 L6.7 6.5Z" fill="none" stroke="#F0A050"/></svg>
<svg class="a" style="left:1900px;top:1020px" width="16" height="16" viewBox="0 0 16 16"><rect x="0.5" y="0.5" width="15" height="15" rx="3" fill="#F07A10" stroke="#E06A10"/><circle cx="4.5" cy="11.5" r="1.6" fill="#fff"/><path d="M3 7 Q9 7 9 13 M3 3.5 Q12.5 3.5 12.5 13" fill="none" stroke="#fff" stroke-width="1.8"/></svg>
<div class="a" style="left:0;top:1040px;width:1920px;height:40px;background:linear-gradient(100deg,#0C0C0C 0%,#161616 30%,#1A1A1A 50%,#121212 70%,#0E0E0E 100%)"></div>
<svg class="a" style="left:16px;top:1052px" width="16" height="16" viewBox="0 0 16 16"><path d="M0 2.3 L6.5 1.4 V7.6 H0 Z M7.4 1.3 L16 0 V7.6 H7.4 Z M0 8.4 H6.5 V14.6 L0 13.7 Z M7.4 8.4 H16 V16 L7.4 14.7 Z" fill="#fff"/></svg>
<div class="a" style="left:48px;top:1040px;width:344px;height:40px;background:#333333"></div>
<svg class="a" style="left:56px;top:1049px" width="22" height="22" viewBox="0 0 22 22"><circle cx="11" cy="11" r="9" fill="none" stroke="#fff" stroke-width="2"/></svg>
<div class="t" style="left:88px;top:1051px;font-size:14.5px;color:#C8C8C8;line-height:20px">Type here to search</div>
<svg class="a" style="left:363px;top:1051px" width="14" height="18" viewBox="0 0 14 18"><rect x="4.5" y="0.5" width="5" height="10" rx="2.5" fill="none" stroke="#C0C0C0"/><path d="M2 7 Q2 13 7 13 Q12 13 12 7 M7 13 V16 M4 16.5 H10" fill="none" stroke="#C0C0C0"/></svg>
<svg class="a" style="left:405px;top:1051px" width="22" height="18" viewBox="0 0 22 18"><rect x="5.5" y="1.5" width="11" height="15" fill="none" stroke="#fff" stroke-width="1.6"/><path d="M3 3 H1 V15 H3 M19 3 H21 V15 H19" fill="none" stroke="#fff" stroke-width="1.2"/></svg>
<svg class="a" style="left:455px;top:1047px" width="26" height="26" viewBox="0 0 26 26"><rect x="9" y="3" width="12" height="10" fill="#fff"/><path d="M9 3 L15 9 L21 3" fill="none" stroke="#0A64C8"/><path d="M1 4 L12 2 V22 L1 20 Z" fill="#0A64C8"/><ellipse cx="6.5" cy="12" rx="3" ry="4" fill="none" stroke="#fff" stroke-width="1.8"/><rect x="12" y="14" width="13" height="10" fill="#E8B878"/><path d="M12 14 L18.5 19 L25 14" fill="none" stroke="#fff"/></svg>
<div class="a" style="left:447px;top:1078px;width:40px;height:2px;background:#76B9ED"></div>
<svg class="a" style="left:503px;top:1047px" width="26" height="26" viewBox="0 0 26 26"><path d="M8 2 L24 5 V17 L8 14 Z" fill="#4AB8F0"/><path d="M2 20 L12 17 L18 20 L8 23 Z" fill="#D8D8D8"/><path d="M16 17 V20" stroke="#C8C8C8"/></svg>
<svg class="a" style="left:553px;top:1048px" width="24" height="24" viewBox="0 0 24 24"><circle cx="10.8" cy="12" r="10.3" fill="#F7941E"/><circle cx="12.6" cy="12" r="10.3" fill="#2C2255"/><rect x="3" y="8.5" width="19" height="1.6" fill="#fff"/><rect x="2.6" y="11.3" width="20" height="1.6" fill="#fff"/><rect x="3" y="14.1" width="19" height="1.6" fill="#fff"/></svg>
<svg class="a" style="left:601px;top:1048px" width="24" height="24" viewBox="0 0 24 24"><circle cx="12" cy="12" r="11" fill="#DB4437"/><path d="M12 12 L2.5 17.5 A11 11 0 0 0 21.5 17.5 Z" fill="#0F9D58"/><path d="M12 12 L21.5 6.5 A11 11 0 0 1 12 23 Z" fill="#F4B400"/><path d="M12 12 L2.5 17.5 A11 11 0 0 0 12 23 Z" fill="#0F9D58"/><circle cx="12" cy="12" r="5" fill="#fff"/><circle cx="12" cy="12" r="4" fill="#4285F4"/></svg>
<div class="a" style="left:594px;top:1078px;width:40px;height:2px;background:#76B9ED"></div>
<div class="a" style="left:639px;top:1040px;width:48px;height:40px;background:#3A3A3A"></div>
<svg class="a" style="left:650px;top:1048px" width="24" height="24" viewBox="0 0 24 24"><circle cx="10.8" cy="12" r="10.3" fill="#F7941E"/><circle cx="12.6" cy="12" r="10.3" fill="#2C2255"/><rect x="3" y="8.5" width="19" height="1.6" fill="#fff"/><rect x="2.6" y="11.3" width="20" height="1.6" fill="#fff"/><rect x="3" y="14.1" width="19" height="1.6" fill="#fff"/></svg>
<div class="a" style="left:639px;top:1078px;width:48px;height:2px;background:#76B9ED"></div>
<svg class="a" style="left:699px;top:1049px" width="24" height="22" viewBox="0 0 24 22"><path d="M1 2 H9 L11 4 H23 V20 H1 Z" fill="#F8D775"/><rect x="1" y="6" width="22" height="14" fill="#FCE08A"/><path d="M6 13 H18 V20 H15 V16 H9 V20 H6 Z" fill="#2A8AD8"/></svg>
<div class="a" style="left:692px;top:1078px;width:40px;height:2px;background:#76B9ED"></div>
<svg class="a" style="left:1735px;top:1054px" width="14" height="10" viewBox="0 0 14 10"><path d="M1 8 L7 2 L13 8" fill="none" stroke="#fff" stroke-width="1.2"/></svg>
<svg class="a" style="left:1758px;top:1050px" width="20" height="18" viewBox="0 0 20 18"><rect x="5.5" y="1.5" width="13" height="10" fill="none" stroke="#fff"/><rect x="1" y="4" width="4" height="9" fill="none" stroke="#fff" stroke-width="0.9"/><path d="M10 12 V15 M7 15.5 H14" stroke="#fff"/></svg>
<svg class="a" style="left:1782px;top:1050px" width="20" height="18" viewBox="0 0 20 18"><path d="M1.5 6.5 H4.5 L8.5 2.5 V15.5 L4.5 11.5 H1.5 Z" fill="none" stroke="#fff"/><path d="M11 6 Q12.5 9 11 12 M13.5 4 Q16 9 13.5 14 M16 2 Q19.5 9 16 16" fill="none" stroke="#fff"/></svg>
<div class="t" style="left:1805px;top:1043px;width:60px;text-align:center;color:#fff;font-size:12px;line-height:16px">6:29 PM</div>
<div class="t" style="left:1799px;top:1061px;width:72px;text-align:center;color:#fff;font-size:12px;line-height:16px">7/18/2017</div>
<svg class="a" style="left:1878px;top:1050px" width="20" height="20" viewBox="0 0 20 20"><path d="M1.5 1.5 H18.5 V14.5 H10 L6 18 V14.5 H1.5 Z" fill="none" stroke="#fff"/></svg>
<div class="a" style="left:1917px;top:1040px;width:3px;height:40px;background:#3A3A3A"></div>
</body></html>
